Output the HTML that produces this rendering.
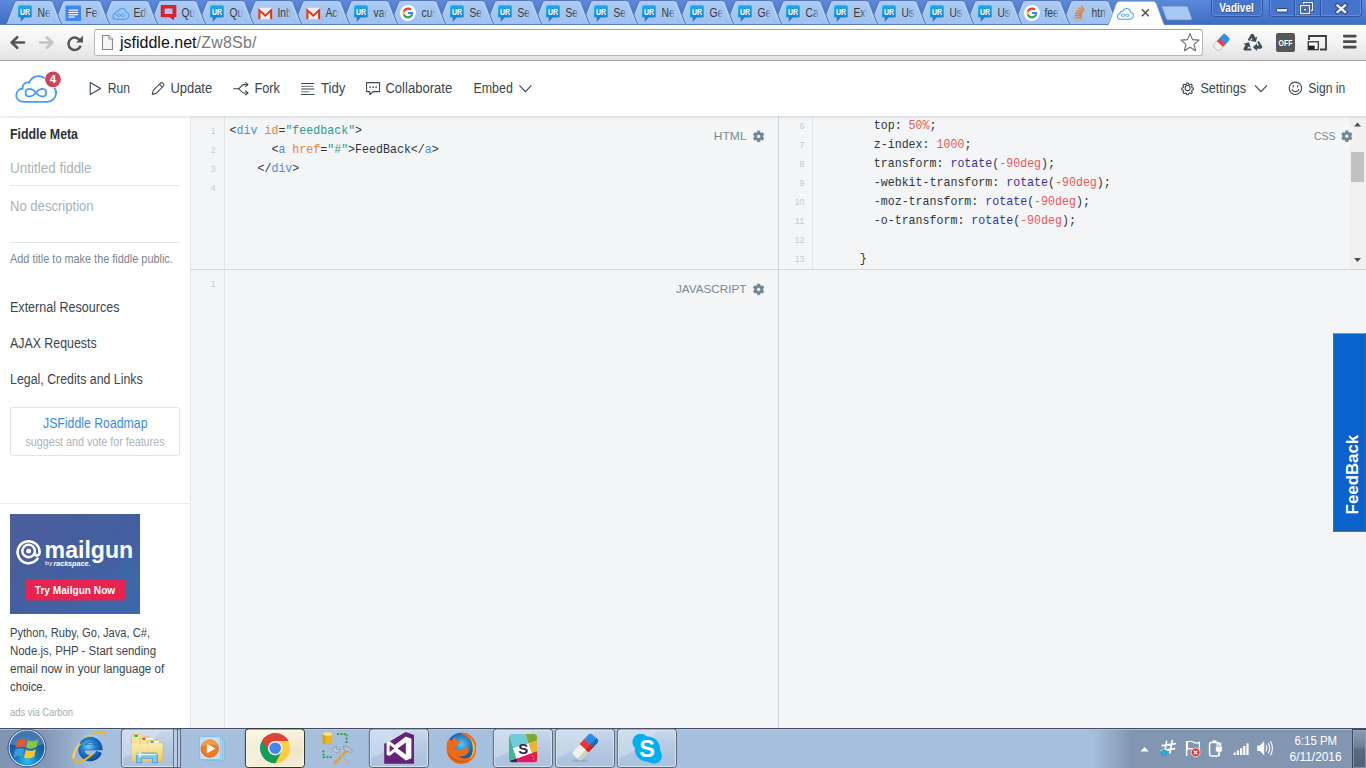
<!DOCTYPE html>
<html>
<head>
<meta charset="utf-8">
<title>jsfiddle</title>
<style>
*{box-sizing:border-box;margin:0;padding:0}
html,body{width:1366px;height:768px;overflow:hidden;background:#fff;font-family:"Liberation Sans",sans-serif;}
.abs{position:absolute}
#root{position:relative;width:1366px;height:768px;overflow:hidden}
svg{position:absolute;overflow:visible}
/* ---------- chrome frame ---------- */
#tabstrip{left:0;top:0;width:1366px;height:25px;background:linear-gradient(#5b8ada,#3f6dc5 96%,#2f5baa 96%);}
#toolbar{left:0;top:25px;width:1366px;height:35px;background:linear-gradient(#fdfdfd,#f2f2f2 50%,#e3e3e3);}
#tbline{left:0;top:60px;width:1366px;height:1px;background:#a3a3a3}
#urlbox{left:94px;top:29px;width:1109px;height:27px;background:#fff;border:1px solid #b7b7b7;border-top-color:#a2a2a2;border-radius:3px}
#url{left:120px;top:33px;font-size:16px;line-height:20px;color:#111;white-space:nowrap}
#url span{color:#7a7a7a;letter-spacing:.22px}
/* ---------- jsfiddle header ---------- */
#hdr{left:0;top:61px;width:1366px;height:55px;background:#fff;box-shadow:0 1px 3px rgba(0,0,0,.13);z-index:5}
.nav{position:absolute;top:80px;font-size:14px;line-height:16px;color:#39464e;white-space:nowrap;z-index:6}
/* ---------- sidebar ---------- */
#side{left:0;top:116px;width:190px;height:612px;background:#fff}
.sb{position:absolute;left:10px;white-space:nowrap;color:#39464e;font-size:14px;line-height:16px}
/* ---------- editor ---------- */
#ed{left:190px;top:116px;width:1176px;height:612px;background:#f3f5f6}
.vl{position:absolute;width:1px;background:#dfe3e6}
.hl{position:absolute;height:1px;background:#d4d9dc}
.code{position:absolute;font-family:"Liberation Mono",monospace;font-size:11.7px;line-height:19px;white-space:pre;color:#30363b}
.ln{position:absolute;font-size:9.5px;line-height:19px;color:#c3cace;text-align:right;width:20px}
.t{color:#4a8fe0}.a{color:#e8803a}.s{color:#2e9a8c}.n{color:#e5595b}.f{color:#3c2fa0}
.lbl{position:absolute;font-size:11.5px;letter-spacing:.6px;color:#7f8c94;white-space:nowrap}
/* ---------- taskbar ---------- */
#task{left:0;top:728px;width:1366px;height:40px;background:#a6c0dc}
</style>
</head>
<body>
<div id="root">
<div id="toolbar" class="abs"></div>
<div id="tbline" class="abs"></div>
<div id="urlbox" class="abs"></div>
<div id="url" class="abs">jsfiddle.net<span>/Zw8Sb/</span></div>
<div id="tabstrip" class="abs"></div>
<svg width="1366" height="26" style="left:0;top:0" font-family="Liberation Sans">
<defs><linearGradient id="urg" x1="0" y1="0" x2="0" y2="1"><stop offset="0" stop-color="#24a8e6"/><stop offset="1" stop-color="#0b7cc6"/></linearGradient><linearGradient id="tabg" x1="0" y1="0" x2="0" y2="1"><stop offset="0" stop-color="#aacbf5"/><stop offset="1" stop-color="#9dc1ef"/></linearGradient><linearGradient id="atab" x1="0" y1="0" x2="0" y2="1"><stop offset="0" stop-color="#ffffff"/><stop offset="1" stop-color="#fdfdfd"/></linearGradient>
<linearGradient id="fade" x1="0" y1="0" x2="1" y2="0"><stop offset="0" stop-color="#9fc3f0" stop-opacity="0"/><stop offset="1" stop-color="#a3c6f2" stop-opacity="1"/></linearGradient>
</defs>
<path d="M1061.3,24.5 C1062.1,24.2 1062.5,23.5 1062.9,22.5 L1069.9,3.8000000000000003 C1070.8,1.5 1071.9,0.6 1074.1,0.6 L1105.5,0.6 C1107.7,0.6 1108.8,1.5 1109.7,3.8000000000000003 L1116.7,22.5 C1117.1,23.5 1117.5,24.2 1118.3,24.5Z" fill="url(#tabg)"/>
<path d="M1062.3,24.5 C1063.1,24.2 1063.5,23.5 1063.9,22.5 L1070.9,4.800000000000001 C1071.8,2.5 1072.9,1.6 1075.1,1.6 L1104.5,1.6 C1106.7,1.6 1107.8,2.5 1108.7,4.800000000000001 L1115.7,22.5 C1116.1,23.5 1116.5,24.2 1117.3,24.5" fill="none" stroke="#c3dafa" stroke-width="1" opacity=".8"/>
<path d="M1061.3,24.5 C1062.1,24.2 1062.5,23.5 1062.9,22.5 L1069.9,3.8000000000000003 C1070.8,1.5 1071.9,0.6 1074.1,0.6 L1105.5,0.6 C1107.7,0.6 1108.8,1.5 1109.7,3.8000000000000003 L1116.7,22.5 C1117.1,23.5 1117.5,24.2 1118.3,24.5" fill="none" stroke="#4f74b6" stroke-width="1"/>
<path d="M1013.3,24.5 C1014.1,24.2 1014.5,23.5 1014.9,22.5 L1021.9,3.8000000000000003 C1022.8,1.5 1023.9,0.6 1026.1,0.6 L1057.5,0.6 C1059.7,0.6 1060.8,1.5 1061.7,3.8000000000000003 L1068.7,22.5 C1069.1,23.5 1069.5,24.2 1070.3,24.5Z" fill="url(#tabg)"/>
<path d="M1014.3,24.5 C1015.1,24.2 1015.5,23.5 1015.9,22.5 L1022.9,4.800000000000001 C1023.8,2.5 1024.9,1.6 1027.1,1.6 L1056.5,1.6 C1058.7,1.6 1059.8,2.5 1060.7,4.800000000000001 L1067.7,22.5 C1068.1,23.5 1068.5,24.2 1069.3,24.5" fill="none" stroke="#c3dafa" stroke-width="1" opacity=".8"/>
<path d="M1013.3,24.5 C1014.1,24.2 1014.5,23.5 1014.9,22.5 L1021.9,3.8000000000000003 C1022.8,1.5 1023.9,0.6 1026.1,0.6 L1057.5,0.6 C1059.7,0.6 1060.8,1.5 1061.7,3.8000000000000003 L1068.7,22.5 C1069.1,23.5 1069.5,24.2 1070.3,24.5" fill="none" stroke="#4f74b6" stroke-width="1"/>
<path d="M965.3,24.5 C966.1,24.2 966.5,23.5 966.9,22.5 L973.9,3.8000000000000003 C974.8,1.5 975.9,0.6 978.1,0.6 L1009.5,0.6 C1011.7,0.6 1012.8,1.5 1013.7,3.8000000000000003 L1020.7,22.5 C1021.1,23.5 1021.5,24.2 1022.3,24.5Z" fill="url(#tabg)"/>
<path d="M966.3,24.5 C967.1,24.2 967.5,23.5 967.9,22.5 L974.9,4.800000000000001 C975.8,2.5 976.9,1.6 979.1,1.6 L1008.5,1.6 C1010.7,1.6 1011.8,2.5 1012.7,4.800000000000001 L1019.7,22.5 C1020.1,23.5 1020.5,24.2 1021.3,24.5" fill="none" stroke="#c3dafa" stroke-width="1" opacity=".8"/>
<path d="M965.3,24.5 C966.1,24.2 966.5,23.5 966.9,22.5 L973.9,3.8000000000000003 C974.8,1.5 975.9,0.6 978.1,0.6 L1009.5,0.6 C1011.7,0.6 1012.8,1.5 1013.7,3.8000000000000003 L1020.7,22.5 C1021.1,23.5 1021.5,24.2 1022.3,24.5" fill="none" stroke="#4f74b6" stroke-width="1"/>
<path d="M917.3,24.5 C918.1,24.2 918.5,23.5 918.9,22.5 L925.9,3.8000000000000003 C926.8,1.5 927.9,0.6 930.1,0.6 L961.5,0.6 C963.7,0.6 964.8,1.5 965.7,3.8000000000000003 L972.7,22.5 C973.1,23.5 973.5,24.2 974.3,24.5Z" fill="url(#tabg)"/>
<path d="M918.3,24.5 C919.1,24.2 919.5,23.5 919.9,22.5 L926.9,4.800000000000001 C927.8,2.5 928.9,1.6 931.1,1.6 L960.5,1.6 C962.7,1.6 963.8,2.5 964.7,4.800000000000001 L971.7,22.5 C972.1,23.5 972.5,24.2 973.3,24.5" fill="none" stroke="#c3dafa" stroke-width="1" opacity=".8"/>
<path d="M917.3,24.5 C918.1,24.2 918.5,23.5 918.9,22.5 L925.9,3.8000000000000003 C926.8,1.5 927.9,0.6 930.1,0.6 L961.5,0.6 C963.7,0.6 964.8,1.5 965.7,3.8000000000000003 L972.7,22.5 C973.1,23.5 973.5,24.2 974.3,24.5" fill="none" stroke="#4f74b6" stroke-width="1"/>
<path d="M869.3,24.5 C870.1,24.2 870.5,23.5 870.9,22.5 L877.9,3.8000000000000003 C878.8,1.5 879.9,0.6 882.1,0.6 L913.5,0.6 C915.7,0.6 916.8,1.5 917.7,3.8000000000000003 L924.7,22.5 C925.1,23.5 925.5,24.2 926.3,24.5Z" fill="url(#tabg)"/>
<path d="M870.3,24.5 C871.1,24.2 871.5,23.5 871.9,22.5 L878.9,4.800000000000001 C879.8,2.5 880.9,1.6 883.1,1.6 L912.5,1.6 C914.7,1.6 915.8,2.5 916.7,4.800000000000001 L923.7,22.5 C924.1,23.5 924.5,24.2 925.3,24.5" fill="none" stroke="#c3dafa" stroke-width="1" opacity=".8"/>
<path d="M869.3,24.5 C870.1,24.2 870.5,23.5 870.9,22.5 L877.9,3.8000000000000003 C878.8,1.5 879.9,0.6 882.1,0.6 L913.5,0.6 C915.7,0.6 916.8,1.5 917.7,3.8000000000000003 L924.7,22.5 C925.1,23.5 925.5,24.2 926.3,24.5" fill="none" stroke="#4f74b6" stroke-width="1"/>
<path d="M821.3,24.5 C822.1,24.2 822.5,23.5 822.9,22.5 L829.9,3.8000000000000003 C830.8,1.5 831.9,0.6 834.1,0.6 L865.5,0.6 C867.7,0.6 868.8,1.5 869.7,3.8000000000000003 L876.7,22.5 C877.1,23.5 877.5,24.2 878.3,24.5Z" fill="url(#tabg)"/>
<path d="M822.3,24.5 C823.1,24.2 823.5,23.5 823.9,22.5 L830.9,4.800000000000001 C831.8,2.5 832.9,1.6 835.1,1.6 L864.5,1.6 C866.7,1.6 867.8,2.5 868.7,4.800000000000001 L875.7,22.5 C876.1,23.5 876.5,24.2 877.3,24.5" fill="none" stroke="#c3dafa" stroke-width="1" opacity=".8"/>
<path d="M821.3,24.5 C822.1,24.2 822.5,23.5 822.9,22.5 L829.9,3.8000000000000003 C830.8,1.5 831.9,0.6 834.1,0.6 L865.5,0.6 C867.7,0.6 868.8,1.5 869.7,3.8000000000000003 L876.7,22.5 C877.1,23.5 877.5,24.2 878.3,24.5" fill="none" stroke="#4f74b6" stroke-width="1"/>
<path d="M773.3,24.5 C774.1,24.2 774.5,23.5 774.9,22.5 L781.9,3.8000000000000003 C782.8,1.5 783.9,0.6 786.1,0.6 L817.5,0.6 C819.7,0.6 820.8,1.5 821.7,3.8000000000000003 L828.7,22.5 C829.1,23.5 829.5,24.2 830.3,24.5Z" fill="url(#tabg)"/>
<path d="M774.3,24.5 C775.1,24.2 775.5,23.5 775.9,22.5 L782.9,4.800000000000001 C783.8,2.5 784.9,1.6 787.1,1.6 L816.5,1.6 C818.7,1.6 819.8,2.5 820.7,4.800000000000001 L827.7,22.5 C828.1,23.5 828.5,24.2 829.3,24.5" fill="none" stroke="#c3dafa" stroke-width="1" opacity=".8"/>
<path d="M773.3,24.5 C774.1,24.2 774.5,23.5 774.9,22.5 L781.9,3.8000000000000003 C782.8,1.5 783.9,0.6 786.1,0.6 L817.5,0.6 C819.7,0.6 820.8,1.5 821.7,3.8000000000000003 L828.7,22.5 C829.1,23.5 829.5,24.2 830.3,24.5" fill="none" stroke="#4f74b6" stroke-width="1"/>
<path d="M725.3,24.5 C726.1,24.2 726.5,23.5 726.9,22.5 L733.9,3.8000000000000003 C734.8,1.5 735.9,0.6 738.1,0.6 L769.5,0.6 C771.7,0.6 772.8,1.5 773.7,3.8000000000000003 L780.7,22.5 C781.1,23.5 781.5,24.2 782.3,24.5Z" fill="url(#tabg)"/>
<path d="M726.3,24.5 C727.1,24.2 727.5,23.5 727.9,22.5 L734.9,4.800000000000001 C735.8,2.5 736.9,1.6 739.1,1.6 L768.5,1.6 C770.7,1.6 771.8,2.5 772.7,4.800000000000001 L779.7,22.5 C780.1,23.5 780.5,24.2 781.3,24.5" fill="none" stroke="#c3dafa" stroke-width="1" opacity=".8"/>
<path d="M725.3,24.5 C726.1,24.2 726.5,23.5 726.9,22.5 L733.9,3.8000000000000003 C734.8,1.5 735.9,0.6 738.1,0.6 L769.5,0.6 C771.7,0.6 772.8,1.5 773.7,3.8000000000000003 L780.7,22.5 C781.1,23.5 781.5,24.2 782.3,24.5" fill="none" stroke="#4f74b6" stroke-width="1"/>
<path d="M677.3,24.5 C678.1,24.2 678.5,23.5 678.9,22.5 L685.9,3.8000000000000003 C686.8,1.5 687.9,0.6 690.1,0.6 L721.5,0.6 C723.7,0.6 724.8,1.5 725.7,3.8000000000000003 L732.7,22.5 C733.1,23.5 733.5,24.2 734.3,24.5Z" fill="url(#tabg)"/>
<path d="M678.3,24.5 C679.1,24.2 679.5,23.5 679.9,22.5 L686.9,4.800000000000001 C687.8,2.5 688.9,1.6 691.1,1.6 L720.5,1.6 C722.7,1.6 723.8,2.5 724.7,4.800000000000001 L731.7,22.5 C732.1,23.5 732.5,24.2 733.3,24.5" fill="none" stroke="#c3dafa" stroke-width="1" opacity=".8"/>
<path d="M677.3,24.5 C678.1,24.2 678.5,23.5 678.9,22.5 L685.9,3.8000000000000003 C686.8,1.5 687.9,0.6 690.1,0.6 L721.5,0.6 C723.7,0.6 724.8,1.5 725.7,3.8000000000000003 L732.7,22.5 C733.1,23.5 733.5,24.2 734.3,24.5" fill="none" stroke="#4f74b6" stroke-width="1"/>
<path d="M629.3,24.5 C630.1,24.2 630.5,23.5 630.9,22.5 L637.9,3.8000000000000003 C638.8,1.5 639.9,0.6 642.1,0.6 L673.5,0.6 C675.7,0.6 676.8,1.5 677.7,3.8000000000000003 L684.7,22.5 C685.1,23.5 685.5,24.2 686.3,24.5Z" fill="url(#tabg)"/>
<path d="M630.3,24.5 C631.1,24.2 631.5,23.5 631.9,22.5 L638.9,4.800000000000001 C639.8,2.5 640.9,1.6 643.1,1.6 L672.5,1.6 C674.7,1.6 675.8,2.5 676.7,4.800000000000001 L683.7,22.5 C684.1,23.5 684.5,24.2 685.3,24.5" fill="none" stroke="#c3dafa" stroke-width="1" opacity=".8"/>
<path d="M629.3,24.5 C630.1,24.2 630.5,23.5 630.9,22.5 L637.9,3.8000000000000003 C638.8,1.5 639.9,0.6 642.1,0.6 L673.5,0.6 C675.7,0.6 676.8,1.5 677.7,3.8000000000000003 L684.7,22.5 C685.1,23.5 685.5,24.2 686.3,24.5" fill="none" stroke="#4f74b6" stroke-width="1"/>
<path d="M581.3,24.5 C582.1,24.2 582.5,23.5 582.9,22.5 L589.9,3.8000000000000003 C590.8,1.5 591.9,0.6 594.1,0.6 L625.5,0.6 C627.7,0.6 628.8,1.5 629.7,3.8000000000000003 L636.7,22.5 C637.1,23.5 637.5,24.2 638.3,24.5Z" fill="url(#tabg)"/>
<path d="M582.3,24.5 C583.1,24.2 583.5,23.5 583.9,22.5 L590.9,4.800000000000001 C591.8,2.5 592.9,1.6 595.1,1.6 L624.5,1.6 C626.7,1.6 627.8,2.5 628.7,4.800000000000001 L635.7,22.5 C636.1,23.5 636.5,24.2 637.3,24.5" fill="none" stroke="#c3dafa" stroke-width="1" opacity=".8"/>
<path d="M581.3,24.5 C582.1,24.2 582.5,23.5 582.9,22.5 L589.9,3.8000000000000003 C590.8,1.5 591.9,0.6 594.1,0.6 L625.5,0.6 C627.7,0.6 628.8,1.5 629.7,3.8000000000000003 L636.7,22.5 C637.1,23.5 637.5,24.2 638.3,24.5" fill="none" stroke="#4f74b6" stroke-width="1"/>
<path d="M533.3,24.5 C534.1,24.2 534.5,23.5 534.9,22.5 L541.9,3.8000000000000003 C542.8,1.5 543.9,0.6 546.1,0.6 L577.5,0.6 C579.7,0.6 580.8,1.5 581.7,3.8000000000000003 L588.7,22.5 C589.1,23.5 589.5,24.2 590.3,24.5Z" fill="url(#tabg)"/>
<path d="M534.3,24.5 C535.1,24.2 535.5,23.5 535.9,22.5 L542.9,4.800000000000001 C543.8,2.5 544.9,1.6 547.1,1.6 L576.5,1.6 C578.7,1.6 579.8,2.5 580.7,4.800000000000001 L587.7,22.5 C588.1,23.5 588.5,24.2 589.3,24.5" fill="none" stroke="#c3dafa" stroke-width="1" opacity=".8"/>
<path d="M533.3,24.5 C534.1,24.2 534.5,23.5 534.9,22.5 L541.9,3.8000000000000003 C542.8,1.5 543.9,0.6 546.1,0.6 L577.5,0.6 C579.7,0.6 580.8,1.5 581.7,3.8000000000000003 L588.7,22.5 C589.1,23.5 589.5,24.2 590.3,24.5" fill="none" stroke="#4f74b6" stroke-width="1"/>
<path d="M485.3,24.5 C486.1,24.2 486.5,23.5 486.9,22.5 L493.9,3.8000000000000003 C494.8,1.5 495.9,0.6 498.1,0.6 L529.5,0.6 C531.7,0.6 532.8,1.5 533.7,3.8000000000000003 L540.7,22.5 C541.1,23.5 541.5,24.2 542.3,24.5Z" fill="url(#tabg)"/>
<path d="M486.3,24.5 C487.1,24.2 487.5,23.5 487.9,22.5 L494.9,4.800000000000001 C495.8,2.5 496.9,1.6 499.1,1.6 L528.5,1.6 C530.7,1.6 531.8,2.5 532.7,4.800000000000001 L539.7,22.5 C540.1,23.5 540.5,24.2 541.3,24.5" fill="none" stroke="#c3dafa" stroke-width="1" opacity=".8"/>
<path d="M485.3,24.5 C486.1,24.2 486.5,23.5 486.9,22.5 L493.9,3.8000000000000003 C494.8,1.5 495.9,0.6 498.1,0.6 L529.5,0.6 C531.7,0.6 532.8,1.5 533.7,3.8000000000000003 L540.7,22.5 C541.1,23.5 541.5,24.2 542.3,24.5" fill="none" stroke="#4f74b6" stroke-width="1"/>
<path d="M437.3,24.5 C438.1,24.2 438.5,23.5 438.9,22.5 L445.9,3.8000000000000003 C446.8,1.5 447.9,0.6 450.1,0.6 L481.5,0.6 C483.7,0.6 484.8,1.5 485.7,3.8000000000000003 L492.7,22.5 C493.1,23.5 493.5,24.2 494.3,24.5Z" fill="url(#tabg)"/>
<path d="M438.3,24.5 C439.1,24.2 439.5,23.5 439.9,22.5 L446.9,4.800000000000001 C447.8,2.5 448.9,1.6 451.1,1.6 L480.5,1.6 C482.7,1.6 483.8,2.5 484.7,4.800000000000001 L491.7,22.5 C492.1,23.5 492.5,24.2 493.3,24.5" fill="none" stroke="#c3dafa" stroke-width="1" opacity=".8"/>
<path d="M437.3,24.5 C438.1,24.2 438.5,23.5 438.9,22.5 L445.9,3.8000000000000003 C446.8,1.5 447.9,0.6 450.1,0.6 L481.5,0.6 C483.7,0.6 484.8,1.5 485.7,3.8000000000000003 L492.7,22.5 C493.1,23.5 493.5,24.2 494.3,24.5" fill="none" stroke="#4f74b6" stroke-width="1"/>
<path d="M389.3,24.5 C390.1,24.2 390.5,23.5 390.9,22.5 L397.9,3.8000000000000003 C398.8,1.5 399.9,0.6 402.1,0.6 L433.5,0.6 C435.7,0.6 436.8,1.5 437.7,3.8000000000000003 L444.7,22.5 C445.1,23.5 445.5,24.2 446.3,24.5Z" fill="url(#tabg)"/>
<path d="M390.3,24.5 C391.1,24.2 391.5,23.5 391.9,22.5 L398.9,4.800000000000001 C399.8,2.5 400.9,1.6 403.1,1.6 L432.5,1.6 C434.7,1.6 435.8,2.5 436.7,4.800000000000001 L443.7,22.5 C444.1,23.5 444.5,24.2 445.3,24.5" fill="none" stroke="#c3dafa" stroke-width="1" opacity=".8"/>
<path d="M389.3,24.5 C390.1,24.2 390.5,23.5 390.9,22.5 L397.9,3.8000000000000003 C398.8,1.5 399.9,0.6 402.1,0.6 L433.5,0.6 C435.7,0.6 436.8,1.5 437.7,3.8000000000000003 L444.7,22.5 C445.1,23.5 445.5,24.2 446.3,24.5" fill="none" stroke="#4f74b6" stroke-width="1"/>
<path d="M341.3,24.5 C342.1,24.2 342.5,23.5 342.9,22.5 L349.9,3.8000000000000003 C350.8,1.5 351.9,0.6 354.1,0.6 L385.5,0.6 C387.7,0.6 388.8,1.5 389.7,3.8000000000000003 L396.7,22.5 C397.1,23.5 397.5,24.2 398.3,24.5Z" fill="url(#tabg)"/>
<path d="M342.3,24.5 C343.1,24.2 343.5,23.5 343.9,22.5 L350.9,4.800000000000001 C351.8,2.5 352.9,1.6 355.1,1.6 L384.5,1.6 C386.7,1.6 387.8,2.5 388.7,4.800000000000001 L395.7,22.5 C396.1,23.5 396.5,24.2 397.3,24.5" fill="none" stroke="#c3dafa" stroke-width="1" opacity=".8"/>
<path d="M341.3,24.5 C342.1,24.2 342.5,23.5 342.9,22.5 L349.9,3.8000000000000003 C350.8,1.5 351.9,0.6 354.1,0.6 L385.5,0.6 C387.7,0.6 388.8,1.5 389.7,3.8000000000000003 L396.7,22.5 C397.1,23.5 397.5,24.2 398.3,24.5" fill="none" stroke="#4f74b6" stroke-width="1"/>
<path d="M293.3,24.5 C294.1,24.2 294.5,23.5 294.9,22.5 L301.9,3.8000000000000003 C302.8,1.5 303.9,0.6 306.1,0.6 L337.5,0.6 C339.7,0.6 340.8,1.5 341.7,3.8000000000000003 L348.7,22.5 C349.1,23.5 349.5,24.2 350.3,24.5Z" fill="url(#tabg)"/>
<path d="M294.3,24.5 C295.1,24.2 295.5,23.5 295.9,22.5 L302.9,4.800000000000001 C303.8,2.5 304.9,1.6 307.1,1.6 L336.5,1.6 C338.7,1.6 339.8,2.5 340.7,4.800000000000001 L347.7,22.5 C348.1,23.5 348.5,24.2 349.3,24.5" fill="none" stroke="#c3dafa" stroke-width="1" opacity=".8"/>
<path d="M293.3,24.5 C294.1,24.2 294.5,23.5 294.9,22.5 L301.9,3.8000000000000003 C302.8,1.5 303.9,0.6 306.1,0.6 L337.5,0.6 C339.7,0.6 340.8,1.5 341.7,3.8000000000000003 L348.7,22.5 C349.1,23.5 349.5,24.2 350.3,24.5" fill="none" stroke="#4f74b6" stroke-width="1"/>
<path d="M245.3,24.5 C246.1,24.2 246.5,23.5 246.9,22.5 L253.9,3.8000000000000003 C254.8,1.5 255.9,0.6 258.1,0.6 L289.5,0.6 C291.7,0.6 292.8,1.5 293.7,3.8000000000000003 L300.7,22.5 C301.1,23.5 301.5,24.2 302.3,24.5Z" fill="url(#tabg)"/>
<path d="M246.3,24.5 C247.1,24.2 247.5,23.5 247.9,22.5 L254.9,4.800000000000001 C255.8,2.5 256.9,1.6 259.1,1.6 L288.5,1.6 C290.7,1.6 291.8,2.5 292.7,4.800000000000001 L299.7,22.5 C300.1,23.5 300.5,24.2 301.3,24.5" fill="none" stroke="#c3dafa" stroke-width="1" opacity=".8"/>
<path d="M245.3,24.5 C246.1,24.2 246.5,23.5 246.9,22.5 L253.9,3.8000000000000003 C254.8,1.5 255.9,0.6 258.1,0.6 L289.5,0.6 C291.7,0.6 292.8,1.5 293.7,3.8000000000000003 L300.7,22.5 C301.1,23.5 301.5,24.2 302.3,24.5" fill="none" stroke="#4f74b6" stroke-width="1"/>
<path d="M197.3,24.5 C198.1,24.2 198.5,23.5 198.9,22.5 L205.9,3.8000000000000003 C206.8,1.5 207.9,0.6 210.1,0.6 L241.5,0.6 C243.7,0.6 244.8,1.5 245.7,3.8000000000000003 L252.7,22.5 C253.1,23.5 253.5,24.2 254.3,24.5Z" fill="url(#tabg)"/>
<path d="M198.3,24.5 C199.1,24.2 199.5,23.5 199.9,22.5 L206.9,4.800000000000001 C207.8,2.5 208.9,1.6 211.1,1.6 L240.5,1.6 C242.7,1.6 243.8,2.5 244.7,4.800000000000001 L251.7,22.5 C252.1,23.5 252.5,24.2 253.3,24.5" fill="none" stroke="#c3dafa" stroke-width="1" opacity=".8"/>
<path d="M197.3,24.5 C198.1,24.2 198.5,23.5 198.9,22.5 L205.9,3.8000000000000003 C206.8,1.5 207.9,0.6 210.1,0.6 L241.5,0.6 C243.7,0.6 244.8,1.5 245.7,3.8000000000000003 L252.7,22.5 C253.1,23.5 253.5,24.2 254.3,24.5" fill="none" stroke="#4f74b6" stroke-width="1"/>
<path d="M149.3,24.5 C150.1,24.2 150.5,23.5 150.9,22.5 L157.9,3.8000000000000003 C158.8,1.5 159.9,0.6 162.1,0.6 L193.5,0.6 C195.7,0.6 196.8,1.5 197.7,3.8000000000000003 L204.7,22.5 C205.1,23.5 205.5,24.2 206.3,24.5Z" fill="url(#tabg)"/>
<path d="M150.3,24.5 C151.1,24.2 151.5,23.5 151.9,22.5 L158.9,4.800000000000001 C159.8,2.5 160.9,1.6 163.1,1.6 L192.5,1.6 C194.7,1.6 195.8,2.5 196.7,4.800000000000001 L203.7,22.5 C204.1,23.5 204.5,24.2 205.3,24.5" fill="none" stroke="#c3dafa" stroke-width="1" opacity=".8"/>
<path d="M149.3,24.5 C150.1,24.2 150.5,23.5 150.9,22.5 L157.9,3.8000000000000003 C158.8,1.5 159.9,0.6 162.1,0.6 L193.5,0.6 C195.7,0.6 196.8,1.5 197.7,3.8000000000000003 L204.7,22.5 C205.1,23.5 205.5,24.2 206.3,24.5" fill="none" stroke="#4f74b6" stroke-width="1"/>
<path d="M101.3,24.5 C102.1,24.2 102.5,23.5 102.9,22.5 L109.9,3.8000000000000003 C110.8,1.5 111.9,0.6 114.1,0.6 L145.5,0.6 C147.7,0.6 148.8,1.5 149.7,3.8000000000000003 L156.7,22.5 C157.1,23.5 157.5,24.2 158.3,24.5Z" fill="url(#tabg)"/>
<path d="M102.3,24.5 C103.1,24.2 103.5,23.5 103.9,22.5 L110.9,4.800000000000001 C111.8,2.5 112.9,1.6 115.1,1.6 L144.5,1.6 C146.7,1.6 147.8,2.5 148.7,4.800000000000001 L155.7,22.5 C156.1,23.5 156.5,24.2 157.3,24.5" fill="none" stroke="#c3dafa" stroke-width="1" opacity=".8"/>
<path d="M101.3,24.5 C102.1,24.2 102.5,23.5 102.9,22.5 L109.9,3.8000000000000003 C110.8,1.5 111.9,0.6 114.1,0.6 L145.5,0.6 C147.7,0.6 148.8,1.5 149.7,3.8000000000000003 L156.7,22.5 C157.1,23.5 157.5,24.2 158.3,24.5" fill="none" stroke="#4f74b6" stroke-width="1"/>
<path d="M53.3,24.5 C54.1,24.2 54.5,23.5 54.9,22.5 L61.9,3.8000000000000003 C62.8,1.5 63.9,0.6 66.1,0.6 L97.5,0.6 C99.7,0.6 100.8,1.5 101.7,3.8000000000000003 L108.7,22.5 C109.1,23.5 109.5,24.2 110.3,24.5Z" fill="url(#tabg)"/>
<path d="M54.3,24.5 C55.1,24.2 55.5,23.5 55.9,22.5 L62.9,4.800000000000001 C63.8,2.5 64.9,1.6 67.1,1.6 L96.5,1.6 C98.7,1.6 99.8,2.5 100.7,4.800000000000001 L107.7,22.5 C108.1,23.5 108.5,24.2 109.3,24.5" fill="none" stroke="#c3dafa" stroke-width="1" opacity=".8"/>
<path d="M53.3,24.5 C54.1,24.2 54.5,23.5 54.9,22.5 L61.9,3.8000000000000003 C62.8,1.5 63.9,0.6 66.1,0.6 L97.5,0.6 C99.7,0.6 100.8,1.5 101.7,3.8000000000000003 L108.7,22.5 C109.1,23.5 109.5,24.2 110.3,24.5" fill="none" stroke="#4f74b6" stroke-width="1"/>
<path d="M5.3,24.5 C6.1,24.2 6.5,23.5 6.9,22.5 L13.9,3.8000000000000003 C14.8,1.5 15.9,0.6 18.1,0.6 L49.5,0.6 C51.7,0.6 52.8,1.5 53.7,3.8000000000000003 L60.7,22.5 C61.1,23.5 61.5,24.2 62.3,24.5Z" fill="url(#tabg)"/>
<path d="M6.3,24.5 C7.1,24.2 7.5,23.5 7.9,22.5 L14.9,4.800000000000001 C15.8,2.5 16.9,1.6 19.1,1.6 L48.5,1.6 C50.7,1.6 51.8,2.5 52.7,4.800000000000001 L59.7,22.5 C60.1,23.5 60.5,24.2 61.3,24.5" fill="none" stroke="#c3dafa" stroke-width="1" opacity=".8"/>
<path d="M5.3,24.5 C6.1,24.2 6.5,23.5 6.9,22.5 L13.9,3.8000000000000003 C14.8,1.5 15.9,0.6 18.1,0.6 L49.5,0.6 C51.7,0.6 52.8,1.5 53.7,3.8000000000000003 L60.7,22.5 C61.1,23.5 61.5,24.2 62.3,24.5" fill="none" stroke="#4f74b6" stroke-width="1"/>
<g transform="translate(17.5,4.8) scale(1,1.06)"><path d="M2.2,0.5 H12.8 Q14.3,0.5 14.3,2 V10.5 Q14.3,12 12.8,12 H7.2 L3.1,16 L3.5,12 H2.2 Q0.7,12 0.7,10.5 V2 Q0.7,0.5 2.2,0.5Z" fill="url(#urg)"/><text x="7.6" y="9.2" font-size="8.2" font-weight="bold" fill="#fff" text-anchor="middle" font-family="Liberation Sans" textLength="10" lengthAdjust="spacingAndGlyphs">UR</text></g>
<clipPath id="tc0"><rect x="35.3" y="3" width="15.6" height="19"/></clipPath>
<text x="37.5" y="17.4" font-size="12.7" fill="#383838" clip-path="url(#tc0)" textLength="20.6" lengthAdjust="spacingAndGlyphs">New</text>
<rect x="44.7" y="5" width="6.6" height="15" fill="url(#fade)"/>
<g transform="translate(65.5,5)"><rect x="0" y="0.5" width="15.5" height="15.5" rx="1" fill="#4285f4"/><rect x="3" y="4.6" width="9.6" height="1.1" fill="#fff"/><rect x="3" y="6.9" width="9.6" height="1.1" fill="#fff"/><rect x="3" y="9.2" width="9.6" height="1.1" fill="#fff"/><rect x="3" y="11.5" width="6.2" height="1.1" fill="#fff"/></g>
<clipPath id="tc1"><rect x="83.3" y="3" width="15.6" height="19"/></clipPath>
<text x="85.5" y="17.4" font-size="12.7" fill="#383838" clip-path="url(#tc1)" textLength="17.7" lengthAdjust="spacingAndGlyphs">Fee</text>
<rect x="92.7" y="5" width="6.6" height="15" fill="url(#fade)"/>
<g transform="translate(112.5,7.6) scale(0.385)" fill="none" stroke="#4a9df2" stroke-width="2.6" stroke-linecap="round" stroke-linejoin="round"><path d="M9,30 C3,30 0.5,25.5 1.5,21.5 C2.3,18 5.5,16 8,16.2 C7.5,11.5 11,8.5 15,9.8 C17,3.5 24,0.5 30,3.5 C34,5.5 35.5,9 36,12.5 C41,12.5 43.5,17 42.5,21.5 C41.5,26.5 37.5,30 33,30 Z"/><path d="M12,20 C12,16 17,15 21.5,20 C26,25 31,24 31,20 C31,16 26,15 21.5,20 C17,25 12,24 12,20Z" stroke-width="2.4"/></g>
<clipPath id="tc2"><rect x="131.3" y="3" width="15.6" height="19"/></clipPath>
<text x="133.5" y="17.4" font-size="12.7" fill="#383838" clip-path="url(#tc2)" textLength="14.9" lengthAdjust="spacingAndGlyphs">Edi</text>
<rect x="140.7" y="5" width="6.6" height="15" fill="url(#fade)"/>
<g transform="translate(160.3,4.5) scale(1.07,1.03)"><path d="M1.2,0.6 H14.2 Q15,0.6 15,1.4 V11.6 Q15,12.4 14.2,12.4 H12.8 V15.4 L8.6,12.4 H1.2 Q0.4,12.4 0.4,11.6 V1.4 Q0.4,0.6 1.2,0.6Z M4,3.8 V9.2 H11.4 V3.8Z" fill="#dc1f2b" fill-rule="evenodd"/></g>
<clipPath id="tc3"><rect x="179.3" y="3" width="15.6" height="19"/></clipPath>
<text x="181.5" y="17.4" font-size="12.7" fill="#383838" clip-path="url(#tc3)" textLength="19.4" lengthAdjust="spacingAndGlyphs">Que</text>
<rect x="188.7" y="5" width="6.6" height="15" fill="url(#fade)"/>
<g transform="translate(209.5,4.8) scale(1,1.06)"><path d="M2.2,0.5 H12.8 Q14.3,0.5 14.3,2 V10.5 Q14.3,12 12.8,12 H7.2 L3.1,16 L3.5,12 H2.2 Q0.7,12 0.7,10.5 V2 Q0.7,0.5 2.2,0.5Z" fill="url(#urg)"/><text x="7.6" y="9.2" font-size="8.2" font-weight="bold" fill="#fff" text-anchor="middle" font-family="Liberation Sans" textLength="10" lengthAdjust="spacingAndGlyphs">UR</text></g>
<clipPath id="tc4"><rect x="227.3" y="3" width="15.6" height="19"/></clipPath>
<text x="229.5" y="17.4" font-size="12.7" fill="#383838" clip-path="url(#tc4)" textLength="19.4" lengthAdjust="spacingAndGlyphs">Que</text>
<rect x="236.7" y="5" width="6.6" height="15" fill="url(#fade)"/>
<g transform="translate(257.8,5.3) scale(0.93,1)"><rect x="0.5" y="2.5" width="15" height="11.5" fill="#f3f0ee"/><path d="M0.5,14 V2.8 L8,9 L15.5,2.8 V14 H13.2 V7.2 L8,11.6 L2.8,7.2 V14Z" fill="#d93a2c"/></g>
<clipPath id="tc5"><rect x="275.3" y="3" width="15.6" height="19"/></clipPath>
<text x="277.5" y="17.4" font-size="12.7" fill="#383838" clip-path="url(#tc5)" textLength="20.0" lengthAdjust="spacingAndGlyphs">Inbo</text>
<rect x="284.7" y="5" width="6.6" height="15" fill="url(#fade)"/>
<g transform="translate(305.8,5.3) scale(0.93,1)"><rect x="0.5" y="2.5" width="15" height="11.5" fill="#f3f0ee"/><path d="M0.5,14 V2.8 L8,9 L15.5,2.8 V14 H13.2 V7.2 L8,11.6 L2.8,7.2 V14Z" fill="#d93a2c"/></g>
<clipPath id="tc6"><rect x="323.3" y="3" width="15.6" height="19"/></clipPath>
<text x="325.5" y="17.4" font-size="12.7" fill="#383838" clip-path="url(#tc6)" textLength="17.1" lengthAdjust="spacingAndGlyphs">Acc</text>
<rect x="332.7" y="5" width="6.6" height="15" fill="url(#fade)"/>
<g transform="translate(353.5,4.8) scale(1,1.06)"><path d="M2.2,0.5 H12.8 Q14.3,0.5 14.3,2 V10.5 Q14.3,12 12.8,12 H7.2 L3.1,16 L3.5,12 H2.2 Q0.7,12 0.7,10.5 V2 Q0.7,0.5 2.2,0.5Z" fill="url(#urg)"/><text x="7.6" y="9.2" font-size="8.2" font-weight="bold" fill="#fff" text-anchor="middle" font-family="Liberation Sans" textLength="10" lengthAdjust="spacingAndGlyphs">UR</text></g>
<clipPath id="tc7"><rect x="371.3" y="3" width="15.6" height="19"/></clipPath>
<text x="373.5" y="17.4" font-size="12.7" fill="#383838" clip-path="url(#tc7)" textLength="16.0" lengthAdjust="spacingAndGlyphs">vac</text>
<rect x="380.7" y="5" width="6.6" height="15" fill="url(#fade)"/>
<g transform="translate(399.9,5)"><circle cx="8" cy="8" r="8" fill="#fff"/><path d="M13.3,8.1 c0,-0.4 0,-0.8 -0.1,-1.1 H8.1 v2.1 h2.9 c-0.1,0.7 -0.5,1.2 -1.1,1.6 v1.3 h1.7 C12.7,11.1 13.3,9.7 13.3,8.1Z" fill="#4285f4"/><path d="M8.1,13.4 c1.5,0 2.7,-0.5 3.6,-1.3 l-1.7,-1.3 c-0.5,0.3 -1.1,0.5 -1.9,0.5 -1.4,0 -2.6,-1 -3.1,-2.3 H3.2 v1.4 C4.1,12.2 6,13.4 8.1,13.4Z" fill="#34a853"/><path d="M5,9 C4.9,8.7 4.8,8.3 4.8,8 s0.1,-0.7 0.2,-1 V5.6 H3.2 C2.9,6.3 2.7,7.1 2.7,8 s0.2,1.7 0.5,2.4 L5,9Z" fill="#fbbc05"/><path d="M8.1,4.7 c0.8,0 1.5,0.3 2.1,0.8 l1.5,-1.5 C10.8,3.1 9.6,2.6 8.1,2.6 6,2.6 4.1,3.8 3.2,5.6 L5,7 C5.5,5.7 6.7,4.7 8.1,4.7Z" fill="#ea4335"/></g>
<clipPath id="tc8"><rect x="419.3" y="3" width="15.6" height="19"/></clipPath>
<text x="421.5" y="17.4" font-size="12.7" fill="#383838" clip-path="url(#tc8)" textLength="16.0" lengthAdjust="spacingAndGlyphs">cus</text>
<rect x="428.7" y="5" width="6.6" height="15" fill="url(#fade)"/>
<g transform="translate(449.5,4.8) scale(1,1.06)"><path d="M2.2,0.5 H12.8 Q14.3,0.5 14.3,2 V10.5 Q14.3,12 12.8,12 H7.2 L3.1,16 L3.5,12 H2.2 Q0.7,12 0.7,10.5 V2 Q0.7,0.5 2.2,0.5Z" fill="url(#urg)"/><text x="7.6" y="9.2" font-size="8.2" font-weight="bold" fill="#fff" text-anchor="middle" font-family="Liberation Sans" textLength="10" lengthAdjust="spacingAndGlyphs">UR</text></g>
<clipPath id="tc9"><rect x="467.3" y="3" width="15.6" height="19"/></clipPath>
<text x="469.5" y="17.4" font-size="12.7" fill="#383838" clip-path="url(#tc9)" textLength="18.3" lengthAdjust="spacingAndGlyphs">Sea</text>
<rect x="476.7" y="5" width="6.6" height="15" fill="url(#fade)"/>
<g transform="translate(497.5,4.8) scale(1,1.06)"><path d="M2.2,0.5 H12.8 Q14.3,0.5 14.3,2 V10.5 Q14.3,12 12.8,12 H7.2 L3.1,16 L3.5,12 H2.2 Q0.7,12 0.7,10.5 V2 Q0.7,0.5 2.2,0.5Z" fill="url(#urg)"/><text x="7.6" y="9.2" font-size="8.2" font-weight="bold" fill="#fff" text-anchor="middle" font-family="Liberation Sans" textLength="10" lengthAdjust="spacingAndGlyphs">UR</text></g>
<clipPath id="tc10"><rect x="515.3" y="3" width="15.6" height="19"/></clipPath>
<text x="517.5" y="17.4" font-size="12.7" fill="#383838" clip-path="url(#tc10)" textLength="18.3" lengthAdjust="spacingAndGlyphs">Sea</text>
<rect x="524.7" y="5" width="6.6" height="15" fill="url(#fade)"/>
<g transform="translate(545.5,4.8) scale(1,1.06)"><path d="M2.2,0.5 H12.8 Q14.3,0.5 14.3,2 V10.5 Q14.3,12 12.8,12 H7.2 L3.1,16 L3.5,12 H2.2 Q0.7,12 0.7,10.5 V2 Q0.7,0.5 2.2,0.5Z" fill="url(#urg)"/><text x="7.6" y="9.2" font-size="8.2" font-weight="bold" fill="#fff" text-anchor="middle" font-family="Liberation Sans" textLength="10" lengthAdjust="spacingAndGlyphs">UR</text></g>
<clipPath id="tc11"><rect x="563.3" y="3" width="15.6" height="19"/></clipPath>
<text x="565.5" y="17.4" font-size="12.7" fill="#383838" clip-path="url(#tc11)" textLength="18.3" lengthAdjust="spacingAndGlyphs">Sea</text>
<rect x="572.7" y="5" width="6.6" height="15" fill="url(#fade)"/>
<g transform="translate(593.5,4.8) scale(1,1.06)"><path d="M2.2,0.5 H12.8 Q14.3,0.5 14.3,2 V10.5 Q14.3,12 12.8,12 H7.2 L3.1,16 L3.5,12 H2.2 Q0.7,12 0.7,10.5 V2 Q0.7,0.5 2.2,0.5Z" fill="url(#urg)"/><text x="7.6" y="9.2" font-size="8.2" font-weight="bold" fill="#fff" text-anchor="middle" font-family="Liberation Sans" textLength="10" lengthAdjust="spacingAndGlyphs">UR</text></g>
<clipPath id="tc12"><rect x="611.3" y="3" width="15.6" height="19"/></clipPath>
<text x="613.5" y="17.4" font-size="12.7" fill="#383838" clip-path="url(#tc12)" textLength="18.3" lengthAdjust="spacingAndGlyphs">Sea</text>
<rect x="620.7" y="5" width="6.6" height="15" fill="url(#fade)"/>
<g transform="translate(641.5,4.8) scale(1,1.06)"><path d="M2.2,0.5 H12.8 Q14.3,0.5 14.3,2 V10.5 Q14.3,12 12.8,12 H7.2 L3.1,16 L3.5,12 H2.2 Q0.7,12 0.7,10.5 V2 Q0.7,0.5 2.2,0.5Z" fill="url(#urg)"/><text x="7.6" y="9.2" font-size="8.2" font-weight="bold" fill="#fff" text-anchor="middle" font-family="Liberation Sans" textLength="10" lengthAdjust="spacingAndGlyphs">UR</text></g>
<clipPath id="tc13"><rect x="659.3" y="3" width="15.6" height="19"/></clipPath>
<text x="661.5" y="17.4" font-size="12.7" fill="#383838" clip-path="url(#tc13)" textLength="20.6" lengthAdjust="spacingAndGlyphs">New</text>
<rect x="668.7" y="5" width="6.6" height="15" fill="url(#fade)"/>
<g transform="translate(689.5,4.8) scale(1,1.06)"><path d="M2.2,0.5 H12.8 Q14.3,0.5 14.3,2 V10.5 Q14.3,12 12.8,12 H7.2 L3.1,16 L3.5,12 H2.2 Q0.7,12 0.7,10.5 V2 Q0.7,0.5 2.2,0.5Z" fill="url(#urg)"/><text x="7.6" y="9.2" font-size="8.2" font-weight="bold" fill="#fff" text-anchor="middle" font-family="Liberation Sans" textLength="10" lengthAdjust="spacingAndGlyphs">UR</text></g>
<clipPath id="tc14"><rect x="707.3" y="3" width="15.6" height="19"/></clipPath>
<text x="709.5" y="17.4" font-size="12.7" fill="#383838" clip-path="url(#tc14)" textLength="16.6" lengthAdjust="spacingAndGlyphs">Get</text>
<rect x="716.7" y="5" width="6.6" height="15" fill="url(#fade)"/>
<g transform="translate(737.5,4.8) scale(1,1.06)"><path d="M2.2,0.5 H12.8 Q14.3,0.5 14.3,2 V10.5 Q14.3,12 12.8,12 H7.2 L3.1,16 L3.5,12 H2.2 Q0.7,12 0.7,10.5 V2 Q0.7,0.5 2.2,0.5Z" fill="url(#urg)"/><text x="7.6" y="9.2" font-size="8.2" font-weight="bold" fill="#fff" text-anchor="middle" font-family="Liberation Sans" textLength="10" lengthAdjust="spacingAndGlyphs">UR</text></g>
<clipPath id="tc15"><rect x="755.3" y="3" width="15.6" height="19"/></clipPath>
<text x="757.5" y="17.4" font-size="12.7" fill="#383838" clip-path="url(#tc15)" textLength="16.6" lengthAdjust="spacingAndGlyphs">Get</text>
<rect x="764.7" y="5" width="6.6" height="15" fill="url(#fade)"/>
<g transform="translate(785.5,4.8) scale(1,1.06)"><path d="M2.2,0.5 H12.8 Q14.3,0.5 14.3,2 V10.5 Q14.3,12 12.8,12 H7.2 L3.1,16 L3.5,12 H2.2 Q0.7,12 0.7,10.5 V2 Q0.7,0.5 2.2,0.5Z" fill="url(#urg)"/><text x="7.6" y="9.2" font-size="8.2" font-weight="bold" fill="#fff" text-anchor="middle" font-family="Liberation Sans" textLength="10" lengthAdjust="spacingAndGlyphs">UR</text></g>
<clipPath id="tc16"><rect x="803.3" y="3" width="15.6" height="19"/></clipPath>
<text x="805.5" y="17.4" font-size="12.7" fill="#383838" clip-path="url(#tc16)" textLength="18.9" lengthAdjust="spacingAndGlyphs">Can</text>
<rect x="812.7" y="5" width="6.6" height="15" fill="url(#fade)"/>
<g transform="translate(833.5,4.8) scale(1,1.06)"><path d="M2.2,0.5 H12.8 Q14.3,0.5 14.3,2 V10.5 Q14.3,12 12.8,12 H7.2 L3.1,16 L3.5,12 H2.2 Q0.7,12 0.7,10.5 V2 Q0.7,0.5 2.2,0.5Z" fill="url(#urg)"/><text x="7.6" y="9.2" font-size="8.2" font-weight="bold" fill="#fff" text-anchor="middle" font-family="Liberation Sans" textLength="10" lengthAdjust="spacingAndGlyphs">UR</text></g>
<clipPath id="tc17"><rect x="851.3" y="3" width="15.6" height="19"/></clipPath>
<text x="853.5" y="17.4" font-size="12.7" fill="#383838" clip-path="url(#tc17)" textLength="14.9" lengthAdjust="spacingAndGlyphs">Ext</text>
<rect x="860.7" y="5" width="6.6" height="15" fill="url(#fade)"/>
<g transform="translate(881.5,4.8) scale(1,1.06)"><path d="M2.2,0.5 H12.8 Q14.3,0.5 14.3,2 V10.5 Q14.3,12 12.8,12 H7.2 L3.1,16 L3.5,12 H2.2 Q0.7,12 0.7,10.5 V2 Q0.7,0.5 2.2,0.5Z" fill="url(#urg)"/><text x="7.6" y="9.2" font-size="8.2" font-weight="bold" fill="#fff" text-anchor="middle" font-family="Liberation Sans" textLength="10" lengthAdjust="spacingAndGlyphs">UR</text></g>
<clipPath id="tc18"><rect x="899.3" y="3" width="15.6" height="19"/></clipPath>
<text x="901.5" y="17.4" font-size="12.7" fill="#383838" clip-path="url(#tc18)" textLength="18.3" lengthAdjust="spacingAndGlyphs">Use</text>
<rect x="908.7" y="5" width="6.6" height="15" fill="url(#fade)"/>
<g transform="translate(929.5,4.8) scale(1,1.06)"><path d="M2.2,0.5 H12.8 Q14.3,0.5 14.3,2 V10.5 Q14.3,12 12.8,12 H7.2 L3.1,16 L3.5,12 H2.2 Q0.7,12 0.7,10.5 V2 Q0.7,0.5 2.2,0.5Z" fill="url(#urg)"/><text x="7.6" y="9.2" font-size="8.2" font-weight="bold" fill="#fff" text-anchor="middle" font-family="Liberation Sans" textLength="10" lengthAdjust="spacingAndGlyphs">UR</text></g>
<clipPath id="tc19"><rect x="947.3" y="3" width="15.6" height="19"/></clipPath>
<text x="949.5" y="17.4" font-size="12.7" fill="#383838" clip-path="url(#tc19)" textLength="18.3" lengthAdjust="spacingAndGlyphs">Use</text>
<rect x="956.7" y="5" width="6.6" height="15" fill="url(#fade)"/>
<g transform="translate(977.5,4.8) scale(1,1.06)"><path d="M2.2,0.5 H12.8 Q14.3,0.5 14.3,2 V10.5 Q14.3,12 12.8,12 H7.2 L3.1,16 L3.5,12 H2.2 Q0.7,12 0.7,10.5 V2 Q0.7,0.5 2.2,0.5Z" fill="url(#urg)"/><text x="7.6" y="9.2" font-size="8.2" font-weight="bold" fill="#fff" text-anchor="middle" font-family="Liberation Sans" textLength="10" lengthAdjust="spacingAndGlyphs">UR</text></g>
<clipPath id="tc20"><rect x="995.3" y="3" width="15.6" height="19"/></clipPath>
<text x="997.5" y="17.4" font-size="12.7" fill="#383838" clip-path="url(#tc20)" textLength="18.3" lengthAdjust="spacingAndGlyphs">Use</text>
<rect x="1004.7" y="5" width="6.6" height="15" fill="url(#fade)"/>
<g transform="translate(1023.9,5)"><circle cx="8" cy="8" r="8" fill="#fff"/><path d="M13.3,8.1 c0,-0.4 0,-0.8 -0.1,-1.1 H8.1 v2.1 h2.9 c-0.1,0.7 -0.5,1.2 -1.1,1.6 v1.3 h1.7 C12.7,11.1 13.3,9.7 13.3,8.1Z" fill="#4285f4"/><path d="M8.1,13.4 c1.5,0 2.7,-0.5 3.6,-1.3 l-1.7,-1.3 c-0.5,0.3 -1.1,0.5 -1.9,0.5 -1.4,0 -2.6,-1 -3.1,-2.3 H3.2 v1.4 C4.1,12.2 6,13.4 8.1,13.4Z" fill="#34a853"/><path d="M5,9 C4.9,8.7 4.8,8.3 4.8,8 s0.1,-0.7 0.2,-1 V5.6 H3.2 C2.9,6.3 2.7,7.1 2.7,8 s0.2,1.7 0.5,2.4 L5,9Z" fill="#fbbc05"/><path d="M8.1,4.7 c0.8,0 1.5,0.3 2.1,0.8 l1.5,-1.5 C10.8,3.1 9.6,2.6 8.1,2.6 6,2.6 4.1,3.8 3.2,5.6 L5,7 C5.5,5.7 6.7,4.7 8.1,4.7Z" fill="#ea4335"/></g>
<clipPath id="tc21"><rect x="1043.3" y="3" width="15.6" height="19"/></clipPath>
<text x="1044.4" y="17.4" font-size="12.7" fill="#383838" clip-path="url(#tc21)" textLength="14.3" lengthAdjust="spacingAndGlyphs">fee</text>
<rect x="1052.7" y="5" width="6.6" height="15" fill="url(#fade)"/>
<g transform="translate(1071.5,5)"><path d="M1.5,10.5 V15 H12 V10.5" fill="none" stroke="#b9b4ae" stroke-width="1"/><g stroke="#f47b20" stroke-width="1.5"><path d="M3.3,12.7 H10.3"/><path d="M3.4,10.3 L10.3,11"/><path d="M3.9,7.7 L10.5,9.4"/><path d="M5.1,5.2 L11,8"/><path d="M7.1,2.7 L11.8,6.8"/><path d="M9.7,0.8 L12.8,5.6"/></g></g>
<clipPath id="tc22"><rect x="1091.3" y="3" width="15.6" height="19"/></clipPath>
<text x="1091.6" y="17.4" font-size="12.7" fill="#383838" clip-path="url(#tc22)" textLength="17.1" lengthAdjust="spacingAndGlyphs">htm</text>
<rect x="1100.7" y="5" width="6.6" height="15" fill="url(#fade)"/>
<rect x="0" y="24" width="1366" height="1" fill="#587db8"/><rect x="0" y="25" width="1366" height="1" fill="#fdfdfd"/>
<path d="M1107.3,25.5 C1108.1,25.2 1108.5,24.5 1108.9,23.5 L1115.9,4.4 C1116.8,2.1 1117.9,1.2 1120.1,1.2 L1152.5,1.2 C1154.7,1.2 1155.8,2.1 1156.7,4.4 L1163.7,23.5 C1164.1,24.5 1164.5,25.2 1165.3,25.5Z" fill="url(#atab)"/>
<path d="M1107.3,25.5 C1108.1,25.2 1108.5,24.5 1108.9,23.5 L1115.9,4.4 C1116.8,2.1 1117.9,1.2 1120.1,1.2 L1152.5,1.2 C1154.7,1.2 1155.8,2.1 1156.7,4.4 L1163.7,23.5 C1164.1,24.5 1164.5,25.2 1165.3,25.5" fill="none" stroke="#7a96c6" stroke-width="0.8"/>
<rect x="1108.3" y="24.6" width="56.0" height="1.6" fill="#fcfcfc"/>
<g transform="translate(1116.9,7.6) scale(0.385)" fill="none" stroke="#4a9df2" stroke-width="2.6" stroke-linecap="round" stroke-linejoin="round"><path d="M9,30 C3,30 0.5,25.5 1.5,21.5 C2.3,18 5.5,16 8,16.2 C7.5,11.5 11,8.5 15,9.8 C17,3.5 24,0.5 30,3.5 C34,5.5 35.5,9 36,12.5 C41,12.5 43.5,17 42.5,21.5 C41.5,26.5 37.5,30 33,30 Z"/><path d="M12,20 C12,16 17,15 21.5,20 C26,25 31,24 31,20 C31,16 26,15 21.5,20 C17,25 12,24 12,20Z" stroke-width="2.4"/></g>
<path d="M1141.9,9.3 l6.9,6.9 M1148.8,9.3 l-6.9,6.9" stroke="#555" stroke-width="1.6"/>
<path d="M1162.5,6 H1186 Q1187.5,6 1188,7.2 L1192,18.8 Q1192.3,20 1191,20 H1168 Q1166.5,20 1166,18.8 L1161.8,7.2 Q1161.5,6 1162.5,6Z" fill="#a7c8f3" stroke="#5c83c2" stroke-width="0.8"/>
<path d="M1211.5,0 V13 Q1211.5,16.5 1215,16.5 H1259 Q1262.5,16.5 1262.5,13 V0" fill="#4474cc" stroke="#2f569f" stroke-width="1"/>
<path d="M1212.5,0 V13 Q1212.5,15.5 1215,15.5 H1259 Q1261.5,15.5 1261.5,13 V0" fill="none" stroke="#6f98df" stroke-width="1" opacity=".7"/>
<text x="1237" y="12.6" font-size="12" fill="#1d2f5a" text-anchor="middle" opacity=".55" font-weight="bold" textLength="34.6" lengthAdjust="spacingAndGlyphs">Vadivel</text>
<text x="1236.5" y="12" font-size="12" fill="#ffffff" text-anchor="middle" font-weight="bold" textLength="34.6" lengthAdjust="spacingAndGlyphs">Vadivel</text>
<path d="M1269.5,0 V13 Q1269.5,16.5 1273,16.5 H1358 Q1361.5,16.5 1361.5,13 V0" fill="#4474cc" stroke="#2f569f" stroke-width="1"/>
<path d="M1270.5,0 V13 Q1270.5,15.5 1273,15.5 H1358 Q1360.5,15.5 1360.5,13 V0" fill="none" stroke="#6f98df" stroke-width="1" opacity=".7"/>
<path d="M1294.5,0 V16 M1320.5,0 V16" stroke="#2f569f" stroke-width="1"/>
<path d="M1295.5,0 V15.5 M1321.5,0 V15.5" stroke="#6f98df" stroke-width="1" opacity=".6"/>
<rect x="1276.5" y="8.5" width="11" height="3.6" rx="0.8" fill="#dfe9fa" stroke="#31476f" stroke-width="1"/>
<rect x="1303.5" y="2.5" width="9" height="8" fill="none" stroke="#31476f" stroke-width="3"/><rect x="1303.5" y="2.5" width="9" height="8" fill="none" stroke="#e6eefc" stroke-width="1.4"/>
<rect x="1300.5" y="5.5" width="9" height="8" fill="#4474cc" stroke="#31476f" stroke-width="3"/><rect x="1300.5" y="5.5" width="9" height="8" fill="none" stroke="#e6eefc" stroke-width="1.4"/><rect x="1303.6" y="8.4" width="2.8" height="2.4" fill="#e6eefc" stroke="#31476f" stroke-width=".6"/>
<path d="M1337.6,5.4 L1345,12 M1345,5.4 L1337.6,12" stroke="#31476f" stroke-width="4.6" stroke-linecap="square"/><path d="M1337.6,5.4 L1345,12 M1345,5.4 L1337.6,12" stroke="#e9f0fc" stroke-width="2.5" stroke-linecap="square"/>
</svg>
<svg width="1366" height="36" style="left:0;top:24px">
<!-- back -->
<path d="M24,18.5 H12.5 M17.2,13.2 L11.6,18.5 L17.2,23.8" fill="none" stroke="#555" stroke-width="2.6" stroke-linecap="round" stroke-linejoin="round"/>
<!-- forward -->
<path d="M40,18.5 H51.5 M46.8,13.2 L52.4,18.5 L46.8,23.8" fill="none" stroke="#c4c4c4" stroke-width="2.6" stroke-linecap="round" stroke-linejoin="round"/>
<!-- reload -->
<path d="M80.3,17.2 A6.2,6.2 0 1 0 80.6,21.6" fill="none" stroke="#555" stroke-width="2.5"/>
<path d="M83,11.4 V18.4 H76 Z" fill="#555"/>
<!-- page icon -->
<path d="M102.5,11.5 H109 L112.5,15 V25.5 H102.5Z" fill="#f4f4f6" stroke="#8a8a8a" stroke-width="1.1"/>
<path d="M109,11.5 V15 H112.5" fill="#fff" stroke="#8a8a8a" stroke-width="1"/>
<!-- star -->
<path d="M1190,9.6 L1192.5,15.6 L1199,16.1 L1194,20.3 L1195.6,26.7 L1190,23.2 L1184.4,26.7 L1186,20.3 L1181,16.1 L1187.5,15.6Z" fill="#fff" stroke="#6c6c6c" stroke-width="1.1" stroke-linejoin="round"/>
<!-- eraser ext -->
<g transform="translate(1221.4,18.4) rotate(-47)">
<rect x="-8.5" y="-4.2" width="17" height="8.4" rx="2.2" fill="#f3f3f3" stroke="#b5b5b5" stroke-width=".8"/>
<path d="M1.5,-4.2 H6.3 Q8.5,-4.2 8.5,-2 V2 Q8.5,4.2 6.3,4.2 H1.5Z" fill="#2f8fe0"/>
<rect x="-2.2" y="-4.2" width="4" height="8.4" fill="#e8434b"/>
</g>
<!-- recycle ext -->
<g fill="#3f4d5c" transform="translate(1253,17) scale(1.1) translate(-1253,-15.6)">
<path d="M1248.2,14.6 L1251,9.8 Q1252.2,8.2 1253.6,9.8 L1255.2,12.6 L1257,11.6 L1255.6,16.6 L1250.6,15.4 L1252.4,14.2 L1251.6,12.6 L1250,15.6Z"/>
<path d="M1258.4,15.6 L1261.2,20.4 Q1262,22.2 1260,22.6 L1256.6,22.6 V24.8 L1253,21.2 L1256.6,17.6 V19.8 L1258.6,19.8 L1256.8,16.6Z"/>
<path d="M1251.4,24.2 L1245.8,24.2 Q1243.8,24 1244.6,22 L1246.2,19.2 L1244.4,18.2 L1249.4,16.8 L1250.8,21.8 L1248.8,20.6 L1247.8,22.4 L1251.4,22.4Z"/>
</g>
<!-- OFF ext -->
<rect x="1276" y="9" width="19" height="19" rx="2" fill="#575757"/>
<text x="1285.5" y="22.3" font-size="8.6" font-weight="bold" fill="#fff" text-anchor="middle" font-family="Liberation Sans" textLength="14" lengthAdjust="spacingAndGlyphs">OFF</text>
<!-- cast -->
<path d="M1309,16 V12 H1326 V25.5 H1320" fill="none" stroke="#3f3f3f" stroke-width="1.8"/>
<rect x="1308.3" y="17.8" width="10" height="7.8" fill="#fff" stroke="#3f3f3f" stroke-width="1.4"/>
<rect x="1308.3" y="21.6" width="6.4" height="4" fill="#222"/>
<!-- menu -->
<rect x="1343" y="10.7" width="13.5" height="2.7" rx=".8" fill="#4a4a4a"/>
<rect x="1343" y="16.2" width="13.5" height="2.7" rx=".8" fill="#4a4a4a"/>
<rect x="1343" y="21.7" width="13.5" height="2.7" rx=".8" fill="#4a4a4a"/>
</svg>
<div id="hdr" class="abs"></div>
<div id="side" class="abs"></div>
<svg width="1366" height="56" style="left:0;top:61px;z-index:6" font-family="Liberation Sans">
<g transform="translate(15.3,13.9) scale(0.97,0.99)" fill="none" stroke="#469df5" stroke-width="1.9" stroke-linecap="round" stroke-linejoin="round"><path d="M9,27.2 C3,27.2 0.2,23 1.2,19 C2,15.6 5,13.8 7.6,14 C7,9.6 10.6,6.6 14.4,7.8 C16.4,2.4 22.6,-0.4 28.4,2.2 C32.4,4 34.2,7.4 34.6,10.8 C39.6,10.8 42.6,14.8 42,19.2 C41.4,23.8 37.6,27.2 33,27.2 Z"/><path d="M10.6,18 C10.6,13.4 16.4,12.4 21.2,18 C26,23.6 31.8,22.6 31.8,18 C31.8,13.4 26,12.4 21.2,18 C16.4,23.6 10.6,22.6 10.6,18Z" stroke-width="1.8"/></g>
<circle cx="53" cy="18.3" r="8.6" fill="#fff"/><circle cx="53" cy="18.3" r="7.9" fill="#d0435b"/>
<text x="53.0" y="22.3" font-size="11.5" fill="#fff" font-weight="bold" text-anchor="middle">4</text>
<path d="M90.2,21.6 L100.6,27.6 L90.2,33.6Z" fill="none" stroke="#39464e" stroke-width="1.1" stroke-linejoin="round"/>
<text x="107.8" y="32.0" font-size="14" fill="#39464e" font-weight="normal" textLength="22.2" lengthAdjust="spacingAndGlyphs">Run</text>
<g fill="none" stroke="#39464e" stroke-width="1.05" stroke-linejoin="round"><path d="M152.2,33.4 L153.4,29.2 L160.6,22 Q161.6,21.2 162.6,22 L163.6,23 Q164.4,24 163.6,25 L156.4,32.2Z"/><path d="M159.4,23.2 L162.4,26.2"/></g>
<text x="170.4" y="32.0" font-size="14" fill="#39464e" font-weight="normal" textLength="41.8" lengthAdjust="spacingAndGlyphs">Update</text>
<g fill="none" stroke="#39464e" stroke-width="1.05" stroke-linecap="round" stroke-linejoin="round"><path d="M233.6,27.8 H238 C240.5,27.8 241,23.6 244,23.6 H247.6 M238,27.8 C240.5,27.8 241,32 244,32 H247.6"/><path d="M245.6,21.6 L248,23.6 L245.6,25.6"/><path d="M245.6,30 L248,32 L245.6,34"/></g>
<text x="254.4" y="32.0" font-size="14" fill="#39464e" font-weight="normal" textLength="25.6" lengthAdjust="spacingAndGlyphs">Fork</text>
<path d="M301.2,22.5 H314.4 M301.2,28 H314.4 M301.2,33.5 H314.4" stroke="#39464e" stroke-width="1" fill="none"/><path d="M301.2,25.3 H313.6 M301.2,30.8 H309.6" stroke="#39464e" stroke-width="1" fill="none" opacity=".75"/>
<text x="321.0" y="32.0" font-size="14" fill="#39464e" font-weight="normal" textLength="24.4" lengthAdjust="spacingAndGlyphs">Tidy</text>
<path d="M366.6,21.6 H379.6 V30.6 H372.8 L369.8,33.8 V30.6 H366.6Z" fill="none" stroke="#39464e" stroke-width="1.05" stroke-linejoin="round"/>
<rect x="369.4" y="25.4" width="1.5" height="1.5" fill="#39464e"/><rect x="372.4" y="25.4" width="1.5" height="1.5" fill="#39464e"/><rect x="375.4" y="25.4" width="1.5" height="1.5" fill="#39464e"/>
<text x="385.4" y="32.0" font-size="14" fill="#39464e" font-weight="normal" textLength="66.8" lengthAdjust="spacingAndGlyphs">Collaborate</text>
<text x="473.4" y="32.0" font-size="14" fill="#39464e" font-weight="normal" textLength="39.4" lengthAdjust="spacingAndGlyphs">Embed</text>
<path d="M519.4,24.4 L525.4,30.6 L531.4,24.4" fill="none" stroke="#39464e" stroke-width="1.1"/>
<g transform="translate(1187.6,27.1) scale(0.77)" fill="none" stroke="#39464e" stroke-width="1.4" stroke-linejoin="round"><path d="M-1.1,-6.6 h2.2 l0.45,1.7 l1.5,0.65 l1.55,-0.9 l1.55,1.55 l-0.9,1.55 l0.65,1.5 l1.7,0.45 v2.2 l-1.7,0.45 l-0.65,1.5 l0.9,1.55 l-1.55,1.55 l-1.55,-0.9 l-1.5,0.65 l-0.45,1.7 h-2.2 l-0.45,-1.7 l-1.5,-0.65 l-1.55,0.9 l-1.55,-1.55 l0.9,-1.55 l-0.65,-1.5 l-1.7,-0.45 v-2.2 l1.7,-0.45 l0.65,-1.5 l-0.9,-1.55 l1.55,-1.55 l1.55,0.9 l1.5,-0.65Z"/><circle r="3.3"/></g>
<text x="1200.4" y="32.0" font-size="14" fill="#39464e" font-weight="normal" textLength="45.6" lengthAdjust="spacingAndGlyphs">Settings</text>
<path d="M1255,24.4 L1261,30.6 L1267,24.4" fill="none" stroke="#39464e" stroke-width="1.1"/>
<g fill="none" stroke="#39464e" stroke-width="1.05"><circle cx="1295.4" cy="27.3" r="6.2"/><path d="M1292,28.6 Q1295.4,33 1298.8,28.6" stroke-linecap="round"/></g><rect x="1292.6" y="24" width="1.1" height="2.6" rx=".5" fill="#39464e"/><rect x="1297.1" y="24" width="1.1" height="2.6" rx=".5" fill="#39464e"/>
<text x="1308.2" y="32.0" font-size="14" fill="#39464e" font-weight="normal" textLength="37.0" lengthAdjust="spacingAndGlyphs">Sign in</text>
</svg>
<svg width="190" height="612" style="left:0;top:116px" font-family="Liberation Sans">
<text x="10.0" y="23.0" font-size="14" fill="#2b3338" font-weight="bold" textLength="68.0" lengthAdjust="spacingAndGlyphs">Fiddle Meta</text>
<text x="10.0" y="57.3" font-size="14" fill="#a8b2b8" font-weight="normal" textLength="81.6" lengthAdjust="spacingAndGlyphs">Untitled fiddle</text>
<rect x="10" y="69" width="170" height="1" fill="#e3e7e9"/>
<text x="10.0" y="95.3" font-size="14" fill="#a8b2b8" font-weight="normal" textLength="83.6" lengthAdjust="spacingAndGlyphs">No description</text>
<rect x="10" y="126" width="170" height="1" fill="#e3e7e9"/>
<text x="10.0" y="147.0" font-size="12" fill="#78868f" font-weight="normal" textLength="162.8" lengthAdjust="spacingAndGlyphs">Add title to make the fiddle public.</text>
<text x="10.0" y="196.0" font-size="14" fill="#39464e" font-weight="normal" textLength="109.4" lengthAdjust="spacingAndGlyphs">External Resources</text>
<text x="10.0" y="232.0" font-size="14" fill="#39464e" font-weight="normal" textLength="86.6" lengthAdjust="spacingAndGlyphs">AJAX Requests</text>
<text x="10.0" y="268.0" font-size="14" fill="#39464e" font-weight="normal" textLength="132.7" lengthAdjust="spacingAndGlyphs">Legal, Credits and Links</text>
<rect x="10.5" y="291.5" width="169" height="48" rx="2" fill="#fff" stroke="#e1e5e8"/>
<text x="43.0" y="312.2" font-size="14" fill="#3b8de6" font-weight="normal" textLength="104.5" lengthAdjust="spacingAndGlyphs">JSFiddle Roadmap</text>
<text x="25.5" y="329.7" font-size="12" fill="#abb5bb" font-weight="normal" textLength="139.0" lengthAdjust="spacingAndGlyphs">suggest and vote for features</text>
<rect x="0" y="387" width="190" height="1" fill="#e9ecee"/>
<defs><linearGradient id="adg" x1="0" y1="0" x2="1" y2="1"><stop offset="0" stop-color="#4a5e9e"/><stop offset=".5" stop-color="#445f9f"/><stop offset="1" stop-color="#3f66aa"/></linearGradient></defs>
<rect x="10" y="398" width="130" height="100" fill="url(#adg)"/>
<path d="M10,398 L70,398 L10,470Z" fill="#4f5c9c" opacity=".35"/><path d="M140,498 L80,498 L140,430Z" fill="#3a6cb0" opacity=".35"/>
<circle cx="28.6" cy="435" r="2.5" fill="#fff"/><circle cx="28.6" cy="435" r="6.3" fill="none" stroke="#fff" stroke-width="2.5"/>
<path d="M37.6,442.6 A11,11 0 1 1 39.6,435.6 Q39.8,439.6 36.4,439.6 Q34.9,439.4 34.9,437" fill="none" stroke="#fff" stroke-width="2.6" stroke-linecap="round"/>
<text x="44.6" y="442.0" font-size="24.6" fill="#fff" font-weight="bold" textLength="88.6" lengthAdjust="spacingAndGlyphs">mailgun</text>
<text x="45.0" y="449.4" font-size="6" fill="#fff" font-weight="normal" textLength="7.4" lengthAdjust="spacingAndGlyphs">by</text>
<text x="53.4" y="449.5" font-size="8" fill="#fff" font-weight="bold" textLength="37.0" lengthAdjust="spacingAndGlyphs" font-style="italic">rackspace.</text>
<rect x="25.4" y="463" width="100.2" height="21.6" rx="3" fill="#e7234f"/>
<text x="34.8" y="477.7" font-size="11" fill="#fff" font-weight="bold" textLength="80.4" lengthAdjust="spacingAndGlyphs">Try Mailgun Now</text>
<text x="10.0" y="521.0" font-size="12.5" fill="#3a464e" font-weight="normal" textLength="140.0" lengthAdjust="spacingAndGlyphs">Python, Ruby, Go, Java, C#,</text>
<text x="10.0" y="539.0" font-size="12.5" fill="#3a464e" font-weight="normal" textLength="146.0" lengthAdjust="spacingAndGlyphs">Node.js, PHP - Start sending</text>
<text x="10.0" y="557.0" font-size="12.5" fill="#3a464e" font-weight="normal" textLength="154.2" lengthAdjust="spacingAndGlyphs">email now in your language of</text>
<text x="10.0" y="575.0" font-size="12.5" fill="#3a464e" font-weight="normal" textLength="35.8" lengthAdjust="spacingAndGlyphs">choice.</text>
<text x="10.0" y="599.6" font-size="10.5" fill="#a2abb2" font-weight="normal" textLength="63.0" lengthAdjust="spacingAndGlyphs">ads via Carbon</text>
</svg>
<div id="ed" class="abs"></div>
<svg width="1176" height="612" style="left:190px;top:116px">
<rect x="0" y="0" width="1" height="612" fill="#e4e8eb"/>
<rect x="34" y="0" width="1" height="612" fill="#e2e6e9"/>
<rect x="588" y="0" width="1" height="612" fill="#cfd6da"/>
<rect x="622" y="0" width="1" height="153" fill="#e2e6e9"/>
<rect x="0" y="153" width="1176" height="1" fill="#d2d8dc"/>
<text x="20.8" y="17.9" font-size="9.9" fill="#c3cacf" font-weight="normal" textLength="4.8" lengthAdjust="spacingAndGlyphs" font-family="Liberation Sans">1</text>
<text x="20.8" y="36.9" font-size="9.9" fill="#c3cacf" font-weight="normal" textLength="4.8" lengthAdjust="spacingAndGlyphs" font-family="Liberation Sans">2</text>
<text x="20.8" y="55.9" font-size="9.9" fill="#c3cacf" font-weight="normal" textLength="4.8" lengthAdjust="spacingAndGlyphs" font-family="Liberation Sans">3</text>
<text x="20.8" y="74.9" font-size="9.9" fill="#c3cacf" font-weight="normal" textLength="4.8" lengthAdjust="spacingAndGlyphs" font-family="Liberation Sans">4</text>
<text x="20.8" y="170.9" font-size="9.9" fill="#c3cacf" font-weight="normal" textLength="4.8" lengthAdjust="spacingAndGlyphs" font-family="Liberation Sans">1</text>
<text x="609.6" y="12.9" font-size="9.9" fill="#c3cacf" font-weight="normal" textLength="4.8" lengthAdjust="spacingAndGlyphs" font-family="Liberation Sans">6</text>
<text x="609.6" y="31.9" font-size="9.9" fill="#c3cacf" font-weight="normal" textLength="4.8" lengthAdjust="spacingAndGlyphs" font-family="Liberation Sans">7</text>
<text x="609.6" y="50.9" font-size="9.9" fill="#c3cacf" font-weight="normal" textLength="4.8" lengthAdjust="spacingAndGlyphs" font-family="Liberation Sans">8</text>
<text x="609.6" y="69.9" font-size="9.9" fill="#c3cacf" font-weight="normal" textLength="4.8" lengthAdjust="spacingAndGlyphs" font-family="Liberation Sans">9</text>
<text x="604.8" y="88.9" font-size="9.9" fill="#c3cacf" font-weight="normal" textLength="9.6" lengthAdjust="spacingAndGlyphs" font-family="Liberation Sans">10</text>
<text x="604.8" y="107.9" font-size="9.9" fill="#c3cacf" font-weight="normal" textLength="9.6" lengthAdjust="spacingAndGlyphs" font-family="Liberation Sans">11</text>
<text x="604.8" y="126.9" font-size="9.9" fill="#c3cacf" font-weight="normal" textLength="9.6" lengthAdjust="spacingAndGlyphs" font-family="Liberation Sans">12</text>
<text x="604.8" y="145.9" font-size="9.9" fill="#c3cacf" font-weight="normal" textLength="9.6" lengthAdjust="spacingAndGlyphs" font-family="Liberation Sans">13</text>
<text transform="translate(0,17.70) scale(1,1.06)" x="39.6" y="0" font-family="Liberation Mono" font-size="11.63" xml:space="preserve"><tspan fill="#30363c">&lt;</tspan><tspan fill="#4a90e2">div</tspan><tspan fill="#30363c"> </tspan><tspan fill="#e9823a">id</tspan><tspan fill="#30363c">=</tspan><tspan fill="#2d9b8f">"feedback"</tspan><tspan fill="#30363c">&gt;</tspan></text>
<text transform="translate(0,36.70) scale(1,1.06)" x="39.6" y="0" font-family="Liberation Mono" font-size="11.63" xml:space="preserve"><tspan fill="#30363c">      &lt;</tspan><tspan fill="#4a90e2">a</tspan><tspan fill="#30363c"> </tspan><tspan fill="#e9823a">href</tspan><tspan fill="#30363c">=</tspan><tspan fill="#2d9b8f">"#"</tspan><tspan fill="#30363c">&gt;FeedBack&lt;/</tspan><tspan fill="#4a90e2">a</tspan><tspan fill="#30363c">&gt;</tspan></text>
<text transform="translate(0,55.70) scale(1,1.06)" x="39.6" y="0" font-family="Liberation Mono" font-size="11.63" xml:space="preserve"><tspan fill="#30363c">    &lt;/</tspan><tspan fill="#4a90e2">div</tspan><tspan fill="#30363c">&gt;</tspan></text>
<text transform="translate(0,12.70) scale(1,1.06)" x="628.0" y="0" font-family="Liberation Mono" font-size="11.63" xml:space="preserve"><tspan fill="#30363c">        top: </tspan><tspan fill="#e55a5e">50%</tspan><tspan fill="#30363c">;</tspan></text>
<text transform="translate(0,31.70) scale(1,1.06)" x="628.0" y="0" font-family="Liberation Mono" font-size="11.63" xml:space="preserve"><tspan fill="#30363c">        z-index: </tspan><tspan fill="#e55a5e">1000</tspan><tspan fill="#30363c">;</tspan></text>
<text transform="translate(0,50.70) scale(1,1.06)" x="628.0" y="0" font-family="Liberation Mono" font-size="11.63" xml:space="preserve"><tspan fill="#30363c">        transform: </tspan><tspan fill="#3a2fa3">rotate</tspan><tspan fill="#30363c">(</tspan><tspan fill="#e55a5e">-90deg</tspan><tspan fill="#30363c">);</tspan></text>
<text transform="translate(0,69.70) scale(1,1.06)" x="628.0" y="0" font-family="Liberation Mono" font-size="11.63" xml:space="preserve"><tspan fill="#30363c">        -webkit-transform: </tspan><tspan fill="#3a2fa3">rotate</tspan><tspan fill="#30363c">(</tspan><tspan fill="#e55a5e">-90deg</tspan><tspan fill="#30363c">);</tspan></text>
<text transform="translate(0,88.70) scale(1,1.06)" x="628.0" y="0" font-family="Liberation Mono" font-size="11.63" xml:space="preserve"><tspan fill="#30363c">        -moz-transform: </tspan><tspan fill="#3a2fa3">rotate</tspan><tspan fill="#30363c">(</tspan><tspan fill="#e55a5e">-90deg</tspan><tspan fill="#30363c">);</tspan></text>
<text transform="translate(0,107.70) scale(1,1.06)" x="628.0" y="0" font-family="Liberation Mono" font-size="11.63" xml:space="preserve"><tspan fill="#30363c">        -o-transform: </tspan><tspan fill="#3a2fa3">rotate</tspan><tspan fill="#30363c">(</tspan><tspan fill="#e55a5e">-90deg</tspan><tspan fill="#30363c">);</tspan></text>
<text transform="translate(0,145.70) scale(1,1.06)" x="628.0" y="0" font-family="Liberation Mono" font-size="11.63" xml:space="preserve"><tspan fill="#30363c">      }</tspan></text>
<rect x="515" y="9" width="66" height="22" rx="11" fill="#f4f6f7"/>
<text x="523.8" y="24.0" font-size="11.6" fill="#7d8a92" font-weight="normal" textLength="32.8" lengthAdjust="spacingAndGlyphs" font-family="Liberation Sans">HTML</text>
<path d="M567.38,14.93 L569.82,14.93 L570.08,16.47 L571.26,17.15 L572.72,16.61 L573.94,18.73 L572.74,19.72 L572.74,21.08 L573.94,22.07 L572.72,24.19 L571.26,23.65 L570.08,24.33 L569.82,25.87 L567.38,25.87 L567.12,24.33 L565.94,23.65 L564.48,24.19 L563.26,22.07 L564.46,21.08 L564.46,19.72 L563.26,18.73 L564.48,16.61 L565.94,17.15 L567.12,16.47 Z M570.50,20.40 A1.9,1.9 0 1 0 566.70,20.40 A1.9,1.9 0 1 0 570.50,20.40Z" fill="#6f8494" fill-rule="evenodd" stroke="#6f8494" stroke-width=".5" stroke-linejoin="round"/>
<rect x="477" y="162" width="104" height="22" rx="11" fill="#f4f6f7"/>
<text x="485.9" y="177.0" font-size="11.6" fill="#7d8a92" font-weight="normal" textLength="70.6" lengthAdjust="spacingAndGlyphs" font-family="Liberation Sans">JAVASCRIPT</text>
<path d="M567.38,167.93 L569.82,167.93 L570.08,169.47 L571.26,170.15 L572.72,169.61 L573.94,171.73 L572.74,172.72 L572.74,174.08 L573.94,175.07 L572.72,177.19 L571.26,176.65 L570.08,177.33 L569.82,178.87 L567.38,178.87 L567.12,177.33 L565.94,176.65 L564.48,177.19 L563.26,175.07 L564.46,174.08 L564.46,172.72 L563.26,171.73 L564.48,169.61 L565.94,170.15 L567.12,169.47 Z M570.50,173.40 A1.9,1.9 0 1 0 566.70,173.40 A1.9,1.9 0 1 0 570.50,173.40Z" fill="#6f8494" fill-rule="evenodd" stroke="#6f8494" stroke-width=".5" stroke-linejoin="round"/>
<rect x="1159" y="0" width="17" height="153" fill="#f0f0f0"/>
<rect x="1161" y="36" width="13" height="30" fill="#c1c1c1"/>
<path d="M1164,10.599999999999994 h7 l-3.5,-4Z" fill="#4f4f4f"/>
<path d="M1164,142 h7 l-3.5,4Z" fill="#4f4f4f"/>
<rect x="1116" y="9" width="50" height="22" rx="11" fill="#f4f6f7" opacity=".9"/>
<text x="1124.0" y="24.0" font-size="11.6" fill="#7d8a92" font-weight="normal" textLength="21.4" lengthAdjust="spacingAndGlyphs" font-family="Liberation Sans">CSS</text>
<path d="M1155.58,14.73 L1158.02,14.73 L1158.28,16.27 L1159.46,16.95 L1160.92,16.41 L1162.14,18.53 L1160.94,19.52 L1160.94,20.88 L1162.14,21.87 L1160.92,23.99 L1159.46,23.45 L1158.28,24.13 L1158.02,25.67 L1155.58,25.67 L1155.32,24.13 L1154.14,23.45 L1152.68,23.99 L1151.46,21.87 L1152.66,20.88 L1152.66,19.52 L1151.46,18.53 L1152.68,16.41 L1154.14,16.95 L1155.32,16.27 Z M1158.70,20.20 A1.9,1.9 0 1 0 1154.90,20.20 A1.9,1.9 0 1 0 1158.70,20.20Z" fill="#6f8494" fill-rule="evenodd" stroke="#6f8494" stroke-width=".5" stroke-linejoin="round"/>
<rect x="1143" y="217" width="33" height="198.5" fill="#0a63c9"/>
<rect x="1143" y="217" width="33" height="1" fill="#6c9fdd"/><rect x="1143" y="217" width="1" height="198" fill="#2b74cc"/>
<rect x="1143" y="414.6" width="33" height="1" fill="#3d4f6a"/><rect x="1175" y="217" width="1" height="198" fill="#3d5f94"/>
<text transform="translate(1167.6,398.4) rotate(-90)" font-family="Liberation Sans" font-weight="bold" font-size="17" fill="#fff" textLength="79.6" lengthAdjust="spacingAndGlyphs">FeedBack</text>
</svg>
<svg width="1366" height="40" style="left:0;top:728px" font-family="Liberation Sans">
<defs>
<linearGradient id="tkl" x1="0" y1="0" x2="1" y2="0"><stop offset="0" stop-color="#8095b2"/><stop offset=".5" stop-color="#8398b6"/><stop offset="1" stop-color="#a6bfdc"/></linearGradient>
<linearGradient id="tkr" x1="0" y1="0" x2="1" y2="0"><stop offset="0" stop-color="#a6bfdc"/><stop offset="1" stop-color="#8296b1"/></linearGradient>
<linearGradient id="btn" x1="0" y1="0" x2="0" y2="1"><stop offset="0" stop-color="#c9d9ec"/><stop offset=".45" stop-color="#b6cae2"/><stop offset="1" stop-color="#a9c1dd"/></linearGradient>
<linearGradient id="btna" x1="0" y1="0" x2="0" y2="1"><stop offset="0" stop-color="#fbf5e3"/><stop offset=".5" stop-color="#efe5c9"/><stop offset="1" stop-color="#f4ecd4"/></linearGradient>
<radialGradient id="orb" cx=".5" cy=".85" r=".9"><stop offset="0" stop-color="#29c0f0"/><stop offset=".35" stop-color="#1477c0"/><stop offset=".8" stop-color="#174a8a"/><stop offset="1" stop-color="#2a5a98"/></radialGradient>
<radialGradient id="ieg" cx=".4" cy=".35" r=".8"><stop offset="0" stop-color="#6fd0f8"/><stop offset=".5" stop-color="#1c7fd0"/><stop offset="1" stop-color="#0c4a9a"/></radialGradient>
<radialGradient id="ffg" cx=".5" cy=".4" r=".6"><stop offset="0" stop-color="#5cc8f0"/><stop offset=".6" stop-color="#1a6fc0"/><stop offset="1" stop-color="#123a80"/></radialGradient>
<linearGradient id="fold" x1="0" y1="0" x2="0" y2="1"><stop offset="0" stop-color="#fbeeb0"/><stop offset="1" stop-color="#ecc95e"/></linearGradient>
</defs>
<rect x="0" y="0" width="1366" height="40" fill="#a6bfdc"/>
<rect x="0" y="0" width="92" height="40" fill="url(#tkl)"/>
<rect x="1092" y="0" width="40" height="40" fill="url(#tkr)"/><rect x="1132" y="0" width="234" height="40" fill="#8296b1"/>
<rect x="0" y="0" width="1366" height="1" fill="#434e62"/><rect x="0" y="1" width="1366" height="1" fill="#b9cbe2" opacity=".7"/>
<circle cx="27" cy="20" r="18" fill="url(#orb)" stroke="#dfeaf6" stroke-width="1.1"/><circle cx="27" cy="20" r="19" fill="none" stroke="#2c4a78" stroke-width=".9"/>
<path d="M9.6,16 A18,18 0 0 1 44.4,16 Q27,22 9.6,16Z" fill="#9fc4e8" opacity=".35"/>
<g transform="translate(27.6,20) scale(1.13)"><path d="M-9,-6.4 Q-4.8,-9.4 -1.2,-7.4 L-2.8,-0.6 Q-6.6,-2.4 -10.6,0.2Z" fill="#e8562a"/><path d="M0.4,-7 Q4.6,-4.6 9.4,-7.6 L7.8,-0.8 Q3.4,2 -1.2,-0.2Z" fill="#8cc63e"/><path d="M-11,1.8 Q-7,-0.8 -3.2,1 L-4.8,7.8 Q-8.6,5.8 -12.6,8.6Z" fill="#3d9be0"/><path d="M-1.6,1.6 Q2.8,3.8 7.4,1 L5.8,7.8 Q1.4,10.6 -3.2,8.4Z" fill="#f9c52a"/></g>
<g transform="translate(90,19.2) scale(1.05)"><path d="M-15.4,12.6 Q-18,8 -10,-3 Q-2,-12.4 8.4,-14.4 Q15,-15.4 14.6,-10.6" fill="none" stroke="#f0b51e" stroke-width="1.7" opacity=".95"/><path d="M8.6,4.6 A8.7,8.7 0 1 1 8.9,0.2 H-7.6" fill="none" stroke="#0d55aa" stroke-width="5.6"/><path d="M8.6,4.6 A8.7,8.7 0 1 1 8.9,0.2 H-7.6" fill="none" stroke="url(#ieg)" stroke-width="4.4"/><path d="M-6,-9.4 Q0,-13.4 7,-9.4" fill="none" stroke="#8fdcff" stroke-width="1.6" opacity=".7"/><path d="M-15.4,12.6 Q-13,16.4 -5.6,12.4 Q-1,9.6 2.6,6.2" fill="none" stroke="#f0b51e" stroke-width="1.9"/><path d="M-15.6,11 Q-16.6,5 -9.4,-3.6" fill="none" stroke="#f6d56a" stroke-width="2.4" opacity=".8"/></g>
<rect x="121.4" y="1.1" width="59" height="38.3" rx="3" fill="url(#btn)" stroke="#505d70" stroke-width="1"/><rect x="122.4" y="2.1" width="57" height="36.3" rx="2.2" fill="none" stroke="#e3ecf7" stroke-width="1" opacity=".85"/><path d="M123.4,30 Q145.4,22 161.4,3 H123.4Z" fill="#dbe6f4" opacity=".45"/>
<rect x="173.6" y="1.1" width="4" height="38.3" fill="#b9cce3" stroke="#505d70" stroke-width=".8"/><rect x="177.6" y="1.1" width="3" height="38.3" fill="#b9cce3" stroke="#505d70" stroke-width=".8"/>
<g transform="translate(131,4.7) scale(1,0.9)"><path d="M0.6,31.6 V3.2 Q0.6,2 1.8,2 H10.4 L12.6,4.6 H19 V31.6Z" fill="#f6e39a" stroke="#d9b95a" stroke-width=".7"/><rect x="3.4" y="2.6" width="3.4" height="2" fill="#1fae3c"/><path d="M9,31.6 V6.6 Q9,5.4 10.2,5.4 H17.4 L19.4,7.8 H26 V31.6Z" fill="#f6e39a" stroke="#d9b95a" stroke-width=".7"/><rect x="11.4" y="6" width="3" height="1.9" fill="#dc3030"/><rect x="15" y="5.8" width="7" height="2" fill="#fff" opacity=".9"/><path d="M16.4,31.8 V10 Q16.4,8.8 17.6,8.8 H22.6 L24.6,11 H30.4 Q31.6,11 31.6,12.2 V31.8Z" fill="url(#fold)" stroke="#d3ae48" stroke-width=".7"/><rect x="19.6" y="9.4" width="3" height="1.8" fill="#2a8cf0"/><rect x="23" y="9.4" width="5" height="1.8" fill="#fff" opacity=".9"/><path d="M0.6,13 H31.6 V31.8 H0.6Z" fill="url(#fold)" opacity=".85"/><path d="M5.6,33.4 V24.6 Q5.6,22.6 7.6,22.6 H24.4 Q26.4,22.6 26.4,24.6 V33.4 H21.4 V28.4 H10.6 V33.4Z" fill="#7fc8ee" stroke="#3d9fd6" stroke-width=".9"/><path d="M6.4,24.2 H25.6" stroke="#dff3fc" stroke-width="1.4"/><path d="M9,20 L10,23 L13,24 L10,25 L9,28 L8,25 L5,24 L8,23Z" fill="#fff" opacity=".9"/></g>
<g transform="translate(199,8)"><rect x="5" y="2" width="20.6" height="21.6" rx="1" fill="#a9d3ee" stroke="#7db4d8" stroke-width=".7" transform="skewY(3)"/><rect x="3" y="1.4" width="20.6" height="22" rx="1" fill="#b5daf1" stroke="#7db4d8" stroke-width=".7" transform="skewY(2)"/><rect x="0.6" y="0.6" width="20.6" height="23" rx="1" fill="#c1e0f4" stroke="#7db4d8" stroke-width=".7"/><circle cx="10.8" cy="12.6" r="8.7" fill="#f17a1c"/><circle cx="10.8" cy="12.6" r="8.7" fill="none" stroke="#d4600e" stroke-width=".7"/><path d="M7.8,7.6 L16.4,12.6 L7.8,17.6Z" fill="#fff"/><path d="M2.4,11 A8.7,8.7 0 0 1 19,10 Q10,6 2.4,11Z" fill="#ffb060" opacity=".55"/></g>
<rect x="245.4" y="1.1" width="59" height="38.3" rx="3" fill="url(#btna)" stroke="#1f2226" stroke-width="1"/><rect x="246.4" y="2.1" width="57" height="36.3" rx="2.2" fill="none" stroke="#fffbe8" stroke-width="1" opacity=".9"/><path d="M247.4,38 Q265.4,30 275.4,10 L280.4,3 H247.4Z" fill="#fffdf3" opacity=".35"/>
<g transform="translate(275.2,20.2)"><circle r="15" fill="#fff"/><path d="M0,0 L-12.99,-7.5 A15,15 0 0 1 12.99,-7.5Z" fill="#db4437"/><path d="M0,0 L12.99,-7.5 A15,15 0 0 1 0,15Z" fill="#ffcd40"/><path d="M0,0 L0,15 A15,15 0 0 1 -12.99,-7.5Z" fill="#0f9d58"/><path d="M-12.99,-7.5 A15,15 0 0 1 12.99,-7.5 L0,-7.5Z" fill="#db4437"/><path d="M0,-7.2 H13.2 A15,15 0 0 1 1.2,14.96 L6.3,3.6Z" fill="#ffcd40"/><path d="M6.3,3.6 L0.2,15 A15,15 0 0 1 -13,-7.4 L-6.3,3.6Z" fill="#0f9d58"/><path d="M-13,-7.4 A15,15 0 0 1 13.2,-7.2 H0 L-6.3,3.6Z" fill="#db4437"/><circle r="7.3" fill="#f1f1f1"/><circle r="5.8" fill="#4285f4"/></g>
<g transform="translate(321,-2)"><path d="M1.6,8 V16.4 A4.8,1.8 0 0 0 11.2,16.4 V8Z" fill="#e9b81c"/><ellipse cx="6.4" cy="8" rx="4.8" ry="1.8" fill="#fbe27a"/><path d="M1.6,8 V16.4 A4.8,1.8 0 0 0 4.6,18 V9.6Z" fill="#c99510" opacity=".6"/><path d="M16,8.2 H25.6 V17" fill="none" stroke="#1e9e2a" stroke-width="1.8" stroke-dasharray="1.8,1.5"/><path d="M2.4,24.4 V31.2 H11" fill="none" stroke="#1e9e2a" stroke-width="1.8" stroke-dasharray="1.8,1.5"/><path d="M13.6,37.4 L26.2,24.2" stroke="#e0a22a" stroke-width="2.6" stroke-linecap="round"/><path d="M22,20.6 Q25.2,19 28.2,21.6 L31.4,25.2 L29.6,27 L26.6,24.6 L24.6,26.4Z" fill="#b9c2cc" stroke="#7d8792" stroke-width=".6"/><path d="M27.6,37 L16,24.6" stroke="#aeb7c1" stroke-width="2.6" stroke-linecap="round"/><path d="M11.4,23.4 Q12.4,20.4 15.6,20.4 L14.8,22.8 L17,24 L19,22.4 Q19.6,25.8 16.6,26.8 Q13,27 11.4,23.4Z" fill="#c4ccd5" stroke="#7d8792" stroke-width=".6"/></g>
<rect x="369.4" y="1.1" width="59" height="38.3" rx="3" fill="url(#btn)" stroke="#505d70" stroke-width="1"/><rect x="370.4" y="2.1" width="57" height="36.3" rx="2.2" fill="none" stroke="#e3ecf7" stroke-width="1" opacity=".85"/><path d="M371.4,30 Q393.4,22 409.4,3 H371.4Z" fill="#dbe6f4" opacity=".45"/>
<g transform="translate(384.2,4.4) scale(1,0.835)"><path d="M0,13.6 L4.6,11.4 L21.4,-0.4 L29.8,3 V37.6 H0Z" fill="#68217a"/><path d="M21.6,5 L27.2,7.6 V31 L21.6,33.6 L10.6,23.6 L5.2,28.4 L2.4,26.8 V11.8 L5.2,10.2 L10.6,15Z" fill="#fff"/><path d="M5.4,14.8 V23.8 L10,19.3Z" fill="#68217a"/><path d="M21.6,12.2 V26.4 L13.4,19.3Z" fill="#68217a"/></g>
<g transform="translate(461.4,19.4)"><circle r="14.6" fill="url(#ffg)"/><path d="M-2,-14.6 A14.6,14.6 0 0 1 14.6,1 A14.6,14.6 0 0 1 -14.6,3 Q-15.6,-4 -11.8,-9.6 Q-11,-6.8 -9.6,-6 Q-9,-9.6 -5.6,-11 Q-6.6,-8 -4,-6.4 Q-1.6,-6.6 -1,-5 Q-3.4,-3.4 -4.4,-2.6 Q-4.6,-0.4 -6.8,-0.2 Q-6,3 -2.4,3.2 Q0.6,3 2.8,1 Q6,1.6 6.6,-0.4 Q8.6,4 5,7.4 Q1,10 -3.6,8.6 Q2,13 8.6,9.4 Q14,5 12.4,-3 Q11.4,-7.6 7.6,-10.8 Q9,-8 8.6,-6.4 Q5.6,-11.6 -2,-14.6Z" fill="#ee6a14"/><path d="M7.6,-10.8 Q13.4,-6 13.4,1.4 Q13,8 8,11.6 Q12.6,5 11,-2.4 Q10.2,-7.4 7.6,-10.8Z" fill="#fbc21e"/><path d="M-14.6,3 A14.6,14.6 0 0 0 8,12 Q0,16 -8,11 Q-13,7 -14.6,3Z" fill="#d9480e"/></g>
<rect x="493.4" y="1.1" width="59" height="38.3" rx="3" fill="url(#btn)" stroke="#505d70" stroke-width="1"/><rect x="494.4" y="2.1" width="57" height="36.3" rx="2.2" fill="none" stroke="#e3ecf7" stroke-width="1" opacity=".85"/><path d="M495.4,30 Q517.4,22 533.4,3 H495.4Z" fill="#dbe6f4" opacity=".45"/>
<g transform="translate(509,6)"><clipPath id="slk"><rect x="0" y="0" width="28.4" height="28.4" rx="3.4"/></clipPath><g clip-path="url(#slk)"><rect width="28.4" height="28.4" fill="#fff"/><path d="M0,0 H16.6 L19.4,9.4 L4.2,14.2Z" fill="#70cadb"/><path d="M16.6,0 H28.4 V6.6 L19.4,9.4Z" fill="#85a630"/><path d="M28.4,6.6 V17 L22.6,19 L19.4,9.4Z" fill="#ecb32d"/><path d="M0,0 L4.2,14.2 L7.6,24.4 L0,27Z" fill="#3eb890"/><path d="M7.6,24.4 L0,27 V28.4 H8.8Z" fill="#3d1f45"/><path d="M7.6,24.4 L22.6,19 L25.6,28.4 H8.8Z" fill="#e01765"/><path d="M22.6,19 L28.4,17 V28.4 H25.6Z" fill="#e2233a"/><path d="M4.2,14.2 L19.4,9.4 L22.6,19 L7.6,24.4Z" fill="#fff"/></g><text x="14.2" y="20" font-size="15" font-weight="bold" fill="#3a1d42" text-anchor="middle">S</text></g>
<rect x="555.4" y="1.1" width="59" height="38.3" rx="3" fill="url(#btn)" stroke="#505d70" stroke-width="1"/><rect x="556.4" y="2.1" width="57" height="36.3" rx="2.2" fill="none" stroke="#e3ecf7" stroke-width="1" opacity=".85"/><path d="M557.4,30 Q579.4,22 595.4,3 H557.4Z" fill="#dbe6f4" opacity=".45"/>
<ellipse cx="580" cy="32.6" rx="8" ry="1.4" fill="#7f8fa6" opacity=".45"/><g transform="translate(585.2,19) rotate(-47) scale(0.9)"><rect x="-15.6" y="-6.8" width="31.2" height="13.6" rx="3.4" fill="#f1f1f1" stroke="#c3c3c3" stroke-width=".6"/><path d="M-15.6,2.4 V3.4 Q-15.6,6.8 -12.2,6.8 H-1 V2.4Z" fill="#cfcfcf"/><path d="M5.6,-6.8 H12.2 Q15.6,-6.8 15.6,-3.4 V3.4 Q15.6,6.8 12.2,6.8 H5.6Z" fill="#2a8de8"/><path d="M5.6,2.4 H15.6 V3.4 Q15.6,6.8 12.2,6.8 H5.6Z" fill="#1b6cc0"/><rect x="-1.8" y="-6.8" width="7.6" height="13.6" fill="#f03434"/><rect x="-1.8" y="2.4" width="7.6" height="4.4" fill="#c72424"/></g>
<rect x="617.4" y="1.1" width="59" height="38.3" rx="3" fill="url(#btn)" stroke="#505d70" stroke-width="1"/><rect x="618.4" y="2.1" width="57" height="36.3" rx="2.2" fill="none" stroke="#e3ecf7" stroke-width="1" opacity=".85"/><path d="M619.4,30 Q641.4,22 657.4,3 H619.4Z" fill="#dbe6f4" opacity=".45"/>
<g transform="translate(647,20.6)"><circle cx="0.4" cy="0.4" r="12.6" fill="#00aff0"/><circle cx="-6.4" cy="-6.6" r="8.2" fill="#00aff0"/><circle cx="6.8" cy="7" r="8.2" fill="#00aff0"/><text x="0.2" y="8.2" font-size="23.5" font-weight="bold" fill="#fff" text-anchor="middle">S</text></g>
<path d="M1140.4,23.4 L1144.6,19 L1148.8,23.4Z" fill="#fff"/>
<g stroke="#fff" stroke-width="1.7" fill="none" stroke-linecap="round"><path d="M1166.6,13.4 L1164.4,25.6 M1172.2,12.6 L1170,24.8 M1162.2,17.6 L1175.4,15.6 M1161.4,22.6 L1174.6,20.6"/></g><circle cx="1164" cy="24.6" r="2.9" fill="#19b5e6" stroke="#0d7fb0" stroke-width=".5"/>
<g transform="translate(0,1)"><path d="M1186.6,12 V27" stroke="#fff" stroke-width="1.5"/><path d="M1187.4,13 Q1190.6,11.4 1193.4,13.2 Q1196,14.8 1199.4,13.4 V20.6 Q1196,22 1193.4,20.4 Q1190.6,18.8 1187.4,20.2Z" fill="none" stroke="#fff" stroke-width="1.2"/><circle cx="1195.6" cy="23.4" r="4.4" fill="#e5322d" stroke="#fff" stroke-width=".7"/><path d="M1193.8,21.6 L1197.4,25.2 M1197.4,21.6 L1193.8,25.2" stroke="#fff" stroke-width="1.3"/></g>
<g transform="translate(0,0.8)"><rect x="1209.6" y="13.6" width="9.6" height="13.6" rx="1.4" fill="none" stroke="#fff" stroke-width="1.5"/><rect x="1212.4" y="11.6" width="4" height="2" fill="#fff"/><path d="M1215.4,17.4 H1222.4 V21 Q1222.4,23.6 1219.8,23.6 H1218 Q1215.4,23.6 1215.4,21Z" fill="#fff" stroke="#76879f" stroke-width=".6"/><path d="M1217.2,14 V17.4 M1220.6,14 V17.4 M1218.9,23.6 V27.4" stroke="#fff" stroke-width="1.3"/></g>
<g fill="#fff"><rect x="1233.6" y="24.6" width="2.2" height="2.4"/><rect x="1236.8" y="22.4" width="2.2" height="4.6"/><rect x="1240" y="20.2" width="2.2" height="6.8"/><rect x="1243.2" y="18" width="2.2" height="9"/><rect x="1246.4" y="15.4" width="2.2" height="11.6"/></g>
<path d="M1257.2,17.4 H1260 L1264.2,13 V27.4 L1260,23 H1257.2Z" fill="#fff"/><g fill="none" stroke="#fff" stroke-width="1.1" stroke-linecap="round"><path d="M1266.2,17.4 Q1267.8,20.2 1266.2,23"/><path d="M1268.4,15.4 Q1271,20.2 1268.4,25"/><path d="M1270.6,13.4 Q1274.2,20.2 1270.6,27"/></g>
<text x="1315.8" y="17" font-size="12" fill="#fff" text-anchor="middle" textLength="42.6" lengthAdjust="spacingAndGlyphs">6:15 PM</text>
<text x="1315.6" y="33.2" font-size="12" fill="#fff" text-anchor="middle" textLength="52" lengthAdjust="spacingAndGlyphs">6/11/2016</text>
<defs><linearGradient id="sdg" x1="0" y1="0" x2="0" y2="1"><stop offset="0" stop-color="#8b9cb3"/><stop offset=".45" stop-color="#6d7f98"/><stop offset=".5" stop-color="#596a83"/><stop offset="1" stop-color="#51617a"/></linearGradient></defs>
<rect x="1352.5" y="1.5" width="14" height="39" fill="url(#sdg)" stroke="#3c4757" stroke-width="1"/><rect x="1353.5" y="2.5" width="12" height="37" fill="none" stroke="#a3b3c8" stroke-width="1" opacity=".55"/>
</svg>
</div>
</body>
</html>
